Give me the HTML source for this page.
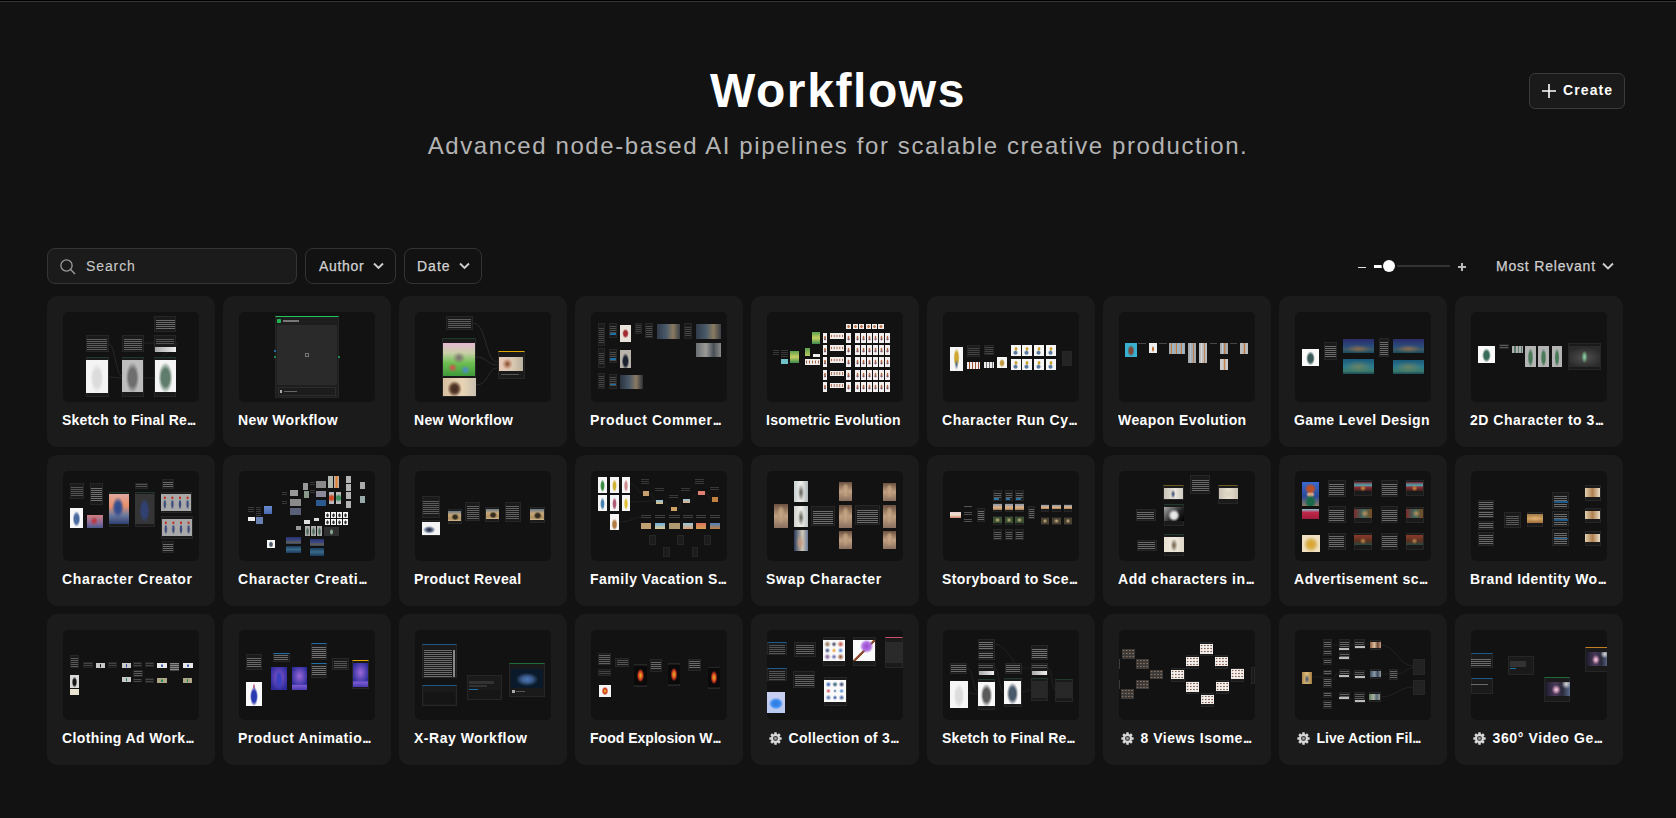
<!DOCTYPE html>
<html><head><meta charset="utf-8"><style>
*{box-sizing:border-box}
html,body{margin:0;padding:0}
body{width:1676px;height:818px;overflow:hidden;background:#121212;position:relative;font-family:"Liberation Sans",sans-serif;color:#fff}
.topline{position:absolute;left:0;top:0;width:1676px;height:1px;background:#000}
.topline2{position:absolute;left:0;top:1px;width:1676px;height:1px;background:#343434}
.h1{position:absolute;left:2px;width:1672px;top:63px;text-align:center;font-weight:700;font-size:48px;line-height:56px;letter-spacing:1.6px;color:#fff}
.sub{position:absolute;left:2px;width:1672px;top:131px;text-align:center;font-size:24px;line-height:30px;letter-spacing:1.6px;color:#b4b4b4}
.create{position:absolute;left:1529px;top:73px;width:96px;height:36px;border:1px solid #3a3a3a;border-radius:6px;background:#1a1a1a}
.create svg{position:absolute;left:11px;top:9px}
.create span{position:absolute;left:33px;top:8px;font-size:14px;font-weight:700;line-height:16px;letter-spacing:1.1px;color:#fff}
.search{position:absolute;left:47px;top:248px;width:250px;height:36px;border:1px solid #353535;border-radius:8px;background:#1b1b1b}
.search svg{position:absolute;left:11px;top:9px}
.search span{position:absolute;left:38px;top:9px;font-size:14px;line-height:16px;letter-spacing:.9px;color:#c8c8c8;-webkit-text-stroke:.1px #c8c8c8}
.dd{position:absolute;top:248px;height:36px;border:1px solid #333;border-radius:8px}
.dd span{position:absolute;left:13px;top:9px;font-size:14px;line-height:16px;letter-spacing:.7px;color:#d2d2d2;-webkit-text-stroke:.25px #d2d2d2}
.dd svg{position:absolute;top:13px}
.card{position:absolute;width:168px;height:151px;background:#1b1b1b;border-radius:10px}
.thumb{position:absolute;left:16px;top:16px;width:136px;height:90px;background:#121212;border-radius:5px;overflow:hidden}
.thumb div{position:absolute}
.ttl{position:absolute;left:15px;top:116px;width:140px;white-space:nowrap;overflow:hidden;font-size:14px;font-weight:700;line-height:16px;letter-spacing:.35px;color:#fff}
.ttl.ar{letter-spacing:0}
.el{letter-spacing:-1.3px}
.gear{display:inline-block;vertical-align:-1.5px;margin-left:3px;margin-right:6.5px}
</style></head><body>
<div class="topline"></div><div class="topline2"></div>
<div class="h1">Workflows</div>
<div class="sub">Advanced node-based AI pipelines for scalable creative production.</div>
<div class="create"><svg width="16" height="16" viewBox="0 0 16 16"><path d="M8 1v14M1 8h14" stroke="#fff" stroke-width="1.6"/></svg><span>Create</span></div>
<div class="search"><svg width="18" height="18" viewBox="0 0 18 18"><circle cx="7.5" cy="7.5" r="5.6" fill="none" stroke="#9a9a9a" stroke-width="1.3"/><path d="M11.6 11.6l4.4 4.4" stroke="#9a9a9a" stroke-width="1.4"/></svg><span>Search</span></div>
<div class="dd" style="left:305px;width:91px"><span>Author</span><svg style="left:67px" width="11" height="8" viewBox="0 0 11 8"><path d="M1 1.5l4.5 4.5 4.5-4.5" fill="none" stroke="#d0d0d0" stroke-width="1.9"/></svg></div>
<div class="dd" style="left:404px;width:78px"><span style="left:12px;letter-spacing:1px">Date</span><svg style="left:54px" width="11" height="8" viewBox="0 0 11 8"><path d="M1 1.5l4.5 4.5 4.5-4.5" fill="none" stroke="#d0d0d0" stroke-width="1.9"/></svg></div>
<div style="position:absolute;left:1358px;top:267px;width:8px;height:1px;background:#e0e0e0"></div>
<div style="position:absolute;left:1374px;top:265px;width:8px;height:2.5px;background:#fff"></div>
<div style="position:absolute;left:1397px;top:265px;width:53px;height:2px;background:#333"></div>
<div style="position:absolute;left:1383px;top:260px;width:12px;height:12px;border-radius:50%;background:#fff;box-shadow:0 0 0 1.5px #141414"></div>
<div style="position:absolute;left:1458px;top:266px;width:8px;height:2px;background:#bbb"></div>
<div style="position:absolute;left:1461px;top:263px;width:2px;height:8px;background:#bbb"></div>
<div style="position:absolute;left:1496px;top:258px;font-size:14px;line-height:16px;letter-spacing:.8px;color:#cfcfcf;-webkit-text-stroke:.25px #cfcfcf">Most Relevant</div>
<svg style="position:absolute;left:1602px;top:262px" width="12" height="8" viewBox="0 0 12 8"><path d="M1 1.5l5 5 5-5" fill="none" stroke="#cfcfcf" stroke-width="1.9"/></svg>
<div class="card" style="left:47px;top:296px"><div class="thumb"><svg style="position:absolute;left:0;top:0" width="136" height="90" viewBox="0 0 136 90"><g fill="none" stroke="#3a3a3a" stroke-width="0.5"><path d="M45.6 32C52 32 53 64 59 64"/><path d="M45 65C52 65 52 66 59 66"/><path d="M81 31C86 31 86 31 91 31"/><path d="M80.3 66C86 66 86 66 92 66"/><path d="M113 31C118 31 100 44 100 44"/></g></svg><div style="left:91.3px;top:4.4px;width:22.0px;height:15.4px;background:#1a1a1a;border:0.6px solid #262626;"></div><div style="left:93.1px;top:7.8px;width:18.5px;height:10.2px;background:repeating-linear-gradient(#cfcfcf 0 0.8px,transparent 0.8px 2.0px);opacity:.45"></div><div style="left:22.5px;top:23.3px;width:23.1px;height:16.9px;background:#1a1a1a;border:0.6px solid #262626;"></div><div style="left:24.3px;top:27.0px;width:19.4px;height:11.2px;background:repeating-linear-gradient(#b0b0b0 0 0.8px,transparent 0.8px 2.0px);opacity:.45"></div><div style="left:58.9px;top:23.3px;width:22.0px;height:16.3px;background:#1a1a1a;border:0.6px solid #262626;"></div><div style="left:60.7px;top:26.9px;width:18.5px;height:10.8px;background:repeating-linear-gradient(#bdbdbd 0 0.8px,transparent 0.8px 2.0px);opacity:.45"></div><div style="left:91.3px;top:23.3px;width:22.0px;height:16.9px;background:#1a1a1a;border:0.6px solid #262626;"></div><div style="left:93.0px;top:27.0px;width:18.0px;height:6.0px;background:repeating-linear-gradient(#999 0 0.8px,transparent 0.8px 2.0px);opacity:.45"></div><div style="left:92.0px;top:35.2px;width:20.5px;height:4.4px;background:linear-gradient(90deg,#aaa,#eee)"></div><div style="left:22.5px;top:44.5px;width:23.1px;height:40.8px;background:#1a1a1a;border:0.6px solid #262626;border-top:0.8px solid #1f3a2a;"></div><div style="left:58.9px;top:44.5px;width:22.0px;height:40.8px;background:#1a1a1a;border:0.6px solid #262626;border-top:0.8px solid #1f3a2a;"></div><div style="left:91.3px;top:44.5px;width:22.0px;height:40.8px;background:#1a1a1a;border:0.6px solid #262626;border-top:0.8px solid #1f3a2a;"></div><div style="left:22.9px;top:48.2px;width:22.0px;height:33.0px;background:radial-gradient(ellipse 30% 45% at 50% 55%,#dcdcdc 0,#dcdcdc 55%,transparent 100%),#f4f4f4"></div><div style="left:59.0px;top:48.2px;width:21.3px;height:31.8px;background:radial-gradient(ellipse 32% 48% at 50% 55%,#6e6e6e 0,#6e6e6e 55%,transparent 100%),#bdbdbd"></div><div style="left:91.9px;top:48.2px;width:21.1px;height:31.8px;background:radial-gradient(ellipse 34% 48% at 50% 55%,#5f7d6a 0,#5f7d6a 55%,transparent 100%),#f5f5f5"></div></div><div class="ttl" style="letter-spacing:0.200px">Sketch to Final Re<span class="el">...</span></div></div><div class="card" style="left:223px;top:296px"><div class="thumb"><div style="left:36.1px;top:4.2px;width:63.8px;height:81.4px;background:#1e1e1e;border:0.6px solid #262626;border-top:0.8px solid #22c55e;"></div><div style="left:38.0px;top:6.6px;width:4.4px;height:4.2px;background:#22b455;border-radius:1px"></div><div style="left:44.0px;top:7.8px;width:16.0px;height:1.8px;background:#777"></div><div style="left:38.0px;top:13.0px;width:60.0px;height:60.2px;background:#2a2a2a;border-radius:1px"></div><div style="left:66.0px;top:41.0px;width:4.0px;height:4.0px;background:transparent;border:0.7px solid #777"></div><div style="left:38.7px;top:75.4px;width:58.7px;height:8.2px;background:#1c1c1c;border:0.6px solid #2c2c2c"></div><div style="left:40.5px;top:78.0px;width:2.5px;height:3.0px;background:#aaa"></div><div style="left:45.0px;top:78.8px;width:13.0px;height:1.4px;background:#666"></div><div style="left:35.0px;top:38.0px;width:1.8px;height:2.0px;background:#2b7fc0;border-radius:50%"></div><div style="left:35.0px;top:44.0px;width:1.8px;height:2.0px;background:#22a355;border-radius:50%"></div><div style="left:99.3px;top:44.0px;width:1.7px;height:2.0px;background:#22a355;border-radius:50%"></div></div><div class="ttl" style="letter-spacing:0.381px">New Workflow</div></div><div class="card" style="left:399px;top:296px"><div class="thumb"><svg style="position:absolute;left:0;top:0" width="136" height="90" viewBox="0 0 136 90"><g fill="none" stroke="#444" stroke-width="0.5"><path d="M57.8 11C72 11 70 50 82.5 50"/><path d="M61 45C72 45 72 53 82.5 53"/><path d="M61 73C74 73 72 56 82.5 56"/></g></svg><div style="left:30.8px;top:4.2px;width:27.0px;height:14.0px;background:#1a1a1a;border:0.6px solid #262626;"></div><div style="left:33.0px;top:7.3px;width:22.7px;height:9.2px;background:repeating-linear-gradient(#aaa 0 0.8px,transparent 0.8px 2.0px);opacity:.45"></div><div style="left:27.3px;top:25.9px;width:33.7px;height:59.4px;background:#1a1a1a;border:0.6px solid #262626;border-top:0.8px solid #1f3a2a;"></div><div style="left:27.8px;top:31.1px;width:32.5px;height:33.0px;background:radial-gradient(ellipse 20% 18% at 50% 45%,#7a6a70,transparent),radial-gradient(circle at 30% 75%,#d94a4a 0,transparent 14%),radial-gradient(circle at 70% 82%,#4a8ad9 0,transparent 14%),linear-gradient(#e6b7d2 0%,#c9d0a8 30%,#6fbf52 60%,#3f9a3a 100%)"></div><div style="left:28.0px;top:66.0px;width:32.5px;height:18.2px;background:radial-gradient(ellipse 22% 45% at 35% 60%,#3c2a22 0,#5a3a2a 50%,transparent 100%),linear-gradient(90deg,#d8c0a0,#e8d4b4 60%,#c8c0b0)"></div><div style="left:82.5px;top:39.0px;width:27.0px;height:28.0px;background:#1a1a1a;border:0.6px solid #262626;border-top:0.8px solid #e0a800;"></div><div style="left:83.8px;top:45.4px;width:24.3px;height:13.6px;background:radial-gradient(ellipse 22% 40% at 35% 50%,#7a4a30 0,#c99a80 60%,transparent 100%),linear-gradient(90deg,#e8c8b8,#d8c8b0 60%,#b8b0a0)"></div><div style="left:86.0px;top:61.5px;width:18.0px;height:1.5px;background:#555"></div></div><div class="ttl" style="letter-spacing:0.319px">New Workflow</div></div><div class="card" style="left:575px;top:296px"><div class="thumb"><div style="left:6.6px;top:11.0px;width:7.7px;height:22.5px;background:#1a1a1a;border:0.6px solid #262626;"></div><div style="left:7.6px;top:15.9px;width:5.7px;height:14.9px;background:repeating-linear-gradient(#777 0 0.8px,transparent 0.8px 2.0px);opacity:.45"></div><div style="left:6.6px;top:36.3px;width:7.7px;height:19.3px;background:#1a1a1a;border:0.6px solid #262626;"></div><div style="left:7.6px;top:40.5px;width:5.7px;height:12.7px;background:repeating-linear-gradient(#777 0 0.8px,transparent 0.8px 2.0px);opacity:.45"></div><div style="left:6.6px;top:61.0px;width:7.7px;height:15.5px;background:#1a1a1a;border:0.6px solid #262626;"></div><div style="left:7.6px;top:64.4px;width:5.7px;height:10.2px;background:repeating-linear-gradient(#777 0 0.8px,transparent 0.8px 2.0px);opacity:.45"></div><div style="left:17.6px;top:11.0px;width:8.3px;height:14.9px;background:#1a1a1a;border:0.6px solid #262626;"></div><div style="left:18.6px;top:14.3px;width:6.3px;height:9.8px;background:repeating-linear-gradient(#888 0 0.8px,transparent 0.8px 2.0px);opacity:.45"></div><div style="left:18.5px;top:20.9px;width:6.5px;height:1.8px;background:#1d6fa5"></div><div style="left:17.6px;top:36.9px;width:8.3px;height:14.3px;background:#1a1a1a;border:0.6px solid #262626;"></div><div style="left:18.6px;top:40.0px;width:6.3px;height:9.4px;background:repeating-linear-gradient(#888 0 0.8px,transparent 0.8px 2.0px);opacity:.45"></div><div style="left:18.5px;top:46.2px;width:6.5px;height:1.8px;background:#1d6fa5"></div><div style="left:17.6px;top:62.0px;width:8.3px;height:14.5px;background:#1a1a1a;border:0.6px solid #262626;"></div><div style="left:18.6px;top:65.2px;width:6.3px;height:9.6px;background:repeating-linear-gradient(#888 0 0.8px,transparent 0.8px 2.0px);opacity:.45"></div><div style="left:18.5px;top:71.5px;width:6.5px;height:1.8px;background:#1d6fa5"></div><div style="left:28.8px;top:12.7px;width:11.4px;height:17.3px;background:radial-gradient(ellipse 30% 28% at 50% 50%,#a02a30 0,#a02a30 55%,transparent 100%),#e8e2d8"></div><div style="left:28.8px;top:37.7px;width:11.4px;height:17.9px;background:radial-gradient(ellipse 34% 45% at 50% 62%,#1a2230 0,#1a2230 55%,transparent 100%),#b8b4ac"></div><div style="left:28.8px;top:62.7px;width:23.5px;height:14.3px;background:linear-gradient(90deg,#2a3340,#4a5868 40%,#8a7a62 70%,#2a3038)"></div><div style="left:43.5px;top:11.0px;width:7.7px;height:11.0px;background:#1a1a1a;border:0.6px solid #262626;"></div><div style="left:44.5px;top:13.4px;width:5.7px;height:7.3px;background:repeating-linear-gradient(#777 0 0.8px,transparent 0.8px 2.0px);opacity:.45"></div><div style="left:54.0px;top:11.0px;width:7.6px;height:15.4px;background:#1a1a1a;border:0.6px solid #262626;"></div><div style="left:55.0px;top:14.4px;width:5.6px;height:10.2px;background:repeating-linear-gradient(#888 0 0.8px,transparent 0.8px 2.0px);opacity:.45"></div><div style="left:65.5px;top:12.3px;width:23.6px;height:14.7px;background:linear-gradient(90deg,#303a48,#4a5a6a 40%,#8a7a60 70%,#3a4048)"></div><div style="left:93.0px;top:11.0px;width:8.2px;height:16.0px;background:#1a1a1a;border:0.6px solid #262626;"></div><div style="left:94.0px;top:14.5px;width:6.2px;height:10.6px;background:repeating-linear-gradient(#777 0 0.8px,transparent 0.8px 2.0px);opacity:.45"></div><div style="left:105.4px;top:12.3px;width:24.2px;height:14.7px;background:linear-gradient(90deg,#303a48,#4a5a6a 40%,#8a7a60 70%,#3a4048)"></div><div style="left:105.4px;top:31.1px;width:24.2px;height:14.3px;background:linear-gradient(90deg,#6a6e72,#9a9a98 40%,#4a5058 70%,#8a8a88)"></div></div><div class="ttl" style="letter-spacing:0.650px">Product Commer<span class="el">...</span></div></div><div class="card" style="left:751px;top:296px"><div class="thumb"><div style="left:55.6px;top:20.7px;width:4.9px;height:10.3px;background:radial-gradient(ellipse 24% 18% at 50% 42%,#b86a40 0,#b86a40 50%,transparent 100%),radial-gradient(ellipse 30% 16% at 50% 62%,#7a5a70 0,#7a5a70 45%,transparent 100%),#f2efee"></div><div style="left:79.0px;top:20.7px;width:5.2px;height:10.3px;background:radial-gradient(ellipse 24% 18% at 50% 42%,#b86a40 0,#b86a40 50%,transparent 100%),radial-gradient(ellipse 30% 16% at 50% 62%,#7a5a70 0,#7a5a70 45%,transparent 100%),#f2efee"></div><div style="left:88.0px;top:20.7px;width:5.0px;height:10.3px;background:radial-gradient(ellipse 24% 18% at 50% 42%,#b86a40 0,#b86a40 50%,transparent 100%),radial-gradient(ellipse 30% 16% at 50% 62%,#7a5a70 0,#7a5a70 45%,transparent 100%),#f2efee"></div><div style="left:94.3px;top:20.7px;width:4.9px;height:10.3px;background:radial-gradient(ellipse 24% 18% at 50% 42%,#b86a40 0,#b86a40 50%,transparent 100%),radial-gradient(ellipse 30% 16% at 50% 62%,#7a5a70 0,#7a5a70 45%,transparent 100%),#f2efee"></div><div style="left:100.3px;top:20.7px;width:4.7px;height:10.3px;background:radial-gradient(ellipse 24% 18% at 50% 42%,#b86a40 0,#b86a40 50%,transparent 100%),radial-gradient(ellipse 30% 16% at 50% 62%,#7a5a70 0,#7a5a70 45%,transparent 100%),#f2efee"></div><div style="left:106.2px;top:20.7px;width:4.9px;height:10.3px;background:radial-gradient(ellipse 24% 18% at 50% 42%,#b86a40 0,#b86a40 50%,transparent 100%),radial-gradient(ellipse 30% 16% at 50% 62%,#7a5a70 0,#7a5a70 45%,transparent 100%),#f2efee"></div><div style="left:112.2px;top:20.7px;width:5.0px;height:10.3px;background:radial-gradient(ellipse 24% 18% at 50% 42%,#b86a40 0,#b86a40 50%,transparent 100%),radial-gradient(ellipse 30% 16% at 50% 62%,#7a5a70 0,#7a5a70 45%,transparent 100%),#f2efee"></div><div style="left:118.0px;top:20.7px;width:5.0px;height:10.3px;background:radial-gradient(ellipse 24% 18% at 50% 42%,#b86a40 0,#b86a40 50%,transparent 100%),radial-gradient(ellipse 30% 16% at 50% 62%,#7a5a70 0,#7a5a70 45%,transparent 100%),#f2efee"></div><div style="left:62.9px;top:20.9px;width:13.8px;height:5.8px;background:radial-gradient(ellipse 0.8px 1.6px,#a86040 0 60%,transparent 100%) 0 0/2.8px 100%,#f0ecea"></div><div style="left:55.6px;top:32.8px;width:4.9px;height:10.1px;background:radial-gradient(ellipse 24% 18% at 50% 42%,#b86a40 0,#b86a40 50%,transparent 100%),radial-gradient(ellipse 30% 16% at 50% 62%,#7a5a70 0,#7a5a70 45%,transparent 100%),#f2efee"></div><div style="left:79.0px;top:32.8px;width:5.2px;height:10.1px;background:radial-gradient(ellipse 24% 18% at 50% 42%,#b86a40 0,#b86a40 50%,transparent 100%),radial-gradient(ellipse 30% 16% at 50% 62%,#7a5a70 0,#7a5a70 45%,transparent 100%),#f2efee"></div><div style="left:88.0px;top:32.8px;width:5.0px;height:10.1px;background:radial-gradient(ellipse 24% 18% at 50% 42%,#b86a40 0,#b86a40 50%,transparent 100%),radial-gradient(ellipse 30% 16% at 50% 62%,#7a5a70 0,#7a5a70 45%,transparent 100%),#f2efee"></div><div style="left:94.3px;top:32.8px;width:4.9px;height:10.1px;background:radial-gradient(ellipse 24% 18% at 50% 42%,#b86a40 0,#b86a40 50%,transparent 100%),radial-gradient(ellipse 30% 16% at 50% 62%,#7a5a70 0,#7a5a70 45%,transparent 100%),#f2efee"></div><div style="left:100.3px;top:32.8px;width:4.7px;height:10.1px;background:radial-gradient(ellipse 24% 18% at 50% 42%,#b86a40 0,#b86a40 50%,transparent 100%),radial-gradient(ellipse 30% 16% at 50% 62%,#7a5a70 0,#7a5a70 45%,transparent 100%),#f2efee"></div><div style="left:106.2px;top:32.8px;width:4.9px;height:10.1px;background:radial-gradient(ellipse 24% 18% at 50% 42%,#b86a40 0,#b86a40 50%,transparent 100%),radial-gradient(ellipse 30% 16% at 50% 62%,#7a5a70 0,#7a5a70 45%,transparent 100%),#f2efee"></div><div style="left:112.2px;top:32.8px;width:5.0px;height:10.1px;background:radial-gradient(ellipse 24% 18% at 50% 42%,#b86a40 0,#b86a40 50%,transparent 100%),radial-gradient(ellipse 30% 16% at 50% 62%,#7a5a70 0,#7a5a70 45%,transparent 100%),#f2efee"></div><div style="left:118.0px;top:32.8px;width:5.0px;height:10.1px;background:radial-gradient(ellipse 24% 18% at 50% 42%,#b86a40 0,#b86a40 50%,transparent 100%),radial-gradient(ellipse 30% 16% at 50% 62%,#7a5a70 0,#7a5a70 45%,transparent 100%),#f2efee"></div><div style="left:62.9px;top:33.0px;width:13.8px;height:5.8px;background:radial-gradient(ellipse 0.8px 1.6px,#a86040 0 60%,transparent 100%) 0 0/2.8px 100%,#f0ecea"></div><div style="left:55.6px;top:44.9px;width:4.9px;height:10.1px;background:radial-gradient(ellipse 24% 18% at 50% 42%,#b86a40 0,#b86a40 50%,transparent 100%),radial-gradient(ellipse 30% 16% at 50% 62%,#7a5a70 0,#7a5a70 45%,transparent 100%),#f2efee"></div><div style="left:79.0px;top:44.9px;width:5.2px;height:10.1px;background:radial-gradient(ellipse 24% 18% at 50% 42%,#b86a40 0,#b86a40 50%,transparent 100%),radial-gradient(ellipse 30% 16% at 50% 62%,#7a5a70 0,#7a5a70 45%,transparent 100%),#f2efee"></div><div style="left:88.0px;top:44.9px;width:5.0px;height:10.1px;background:radial-gradient(ellipse 24% 18% at 50% 42%,#b86a40 0,#b86a40 50%,transparent 100%),radial-gradient(ellipse 30% 16% at 50% 62%,#7a5a70 0,#7a5a70 45%,transparent 100%),#f2efee"></div><div style="left:94.3px;top:44.9px;width:4.9px;height:10.1px;background:radial-gradient(ellipse 24% 18% at 50% 42%,#b86a40 0,#b86a40 50%,transparent 100%),radial-gradient(ellipse 30% 16% at 50% 62%,#7a5a70 0,#7a5a70 45%,transparent 100%),#f2efee"></div><div style="left:100.3px;top:44.9px;width:4.7px;height:10.1px;background:radial-gradient(ellipse 24% 18% at 50% 42%,#b86a40 0,#b86a40 50%,transparent 100%),radial-gradient(ellipse 30% 16% at 50% 62%,#7a5a70 0,#7a5a70 45%,transparent 100%),#f2efee"></div><div style="left:106.2px;top:44.9px;width:4.9px;height:10.1px;background:radial-gradient(ellipse 24% 18% at 50% 42%,#b86a40 0,#b86a40 50%,transparent 100%),radial-gradient(ellipse 30% 16% at 50% 62%,#7a5a70 0,#7a5a70 45%,transparent 100%),#f2efee"></div><div style="left:112.2px;top:44.9px;width:5.0px;height:10.1px;background:radial-gradient(ellipse 24% 18% at 50% 42%,#b86a40 0,#b86a40 50%,transparent 100%),radial-gradient(ellipse 30% 16% at 50% 62%,#7a5a70 0,#7a5a70 45%,transparent 100%),#f2efee"></div><div style="left:118.0px;top:44.9px;width:5.0px;height:10.1px;background:radial-gradient(ellipse 24% 18% at 50% 42%,#b86a40 0,#b86a40 50%,transparent 100%),radial-gradient(ellipse 30% 16% at 50% 62%,#7a5a70 0,#7a5a70 45%,transparent 100%),#f2efee"></div><div style="left:62.9px;top:45.1px;width:13.8px;height:5.8px;background:radial-gradient(ellipse 0.8px 1.6px,#a86040 0 60%,transparent 100%) 0 0/2.8px 100%,#f0ecea"></div><div style="left:55.6px;top:58.3px;width:4.9px;height:10.1px;background:radial-gradient(ellipse 24% 18% at 50% 42%,#b86a40 0,#b86a40 50%,transparent 100%),radial-gradient(ellipse 30% 16% at 50% 62%,#7a5a70 0,#7a5a70 45%,transparent 100%),#f2efee"></div><div style="left:79.0px;top:58.3px;width:5.2px;height:10.1px;background:radial-gradient(ellipse 24% 18% at 50% 42%,#b86a40 0,#b86a40 50%,transparent 100%),radial-gradient(ellipse 30% 16% at 50% 62%,#7a5a70 0,#7a5a70 45%,transparent 100%),#f2efee"></div><div style="left:88.0px;top:58.3px;width:5.0px;height:10.1px;background:radial-gradient(ellipse 24% 18% at 50% 42%,#b86a40 0,#b86a40 50%,transparent 100%),radial-gradient(ellipse 30% 16% at 50% 62%,#7a5a70 0,#7a5a70 45%,transparent 100%),#f2efee"></div><div style="left:94.3px;top:58.3px;width:4.9px;height:10.1px;background:radial-gradient(ellipse 24% 18% at 50% 42%,#b86a40 0,#b86a40 50%,transparent 100%),radial-gradient(ellipse 30% 16% at 50% 62%,#7a5a70 0,#7a5a70 45%,transparent 100%),#f2efee"></div><div style="left:100.3px;top:58.3px;width:4.7px;height:10.1px;background:radial-gradient(ellipse 24% 18% at 50% 42%,#b86a40 0,#b86a40 50%,transparent 100%),radial-gradient(ellipse 30% 16% at 50% 62%,#7a5a70 0,#7a5a70 45%,transparent 100%),#f2efee"></div><div style="left:106.2px;top:58.3px;width:4.9px;height:10.1px;background:radial-gradient(ellipse 24% 18% at 50% 42%,#b86a40 0,#b86a40 50%,transparent 100%),radial-gradient(ellipse 30% 16% at 50% 62%,#7a5a70 0,#7a5a70 45%,transparent 100%),#f2efee"></div><div style="left:112.2px;top:58.3px;width:5.0px;height:10.1px;background:radial-gradient(ellipse 24% 18% at 50% 42%,#b86a40 0,#b86a40 50%,transparent 100%),radial-gradient(ellipse 30% 16% at 50% 62%,#7a5a70 0,#7a5a70 45%,transparent 100%),#f2efee"></div><div style="left:118.0px;top:58.3px;width:5.0px;height:10.1px;background:radial-gradient(ellipse 24% 18% at 50% 42%,#b86a40 0,#b86a40 50%,transparent 100%),radial-gradient(ellipse 30% 16% at 50% 62%,#7a5a70 0,#7a5a70 45%,transparent 100%),#f2efee"></div><div style="left:62.9px;top:58.5px;width:13.8px;height:5.8px;background:radial-gradient(ellipse 0.8px 1.6px,#a86040 0 60%,transparent 100%) 0 0/2.8px 100%,#f0ecea"></div><div style="left:55.6px;top:70.4px;width:4.9px;height:10.1px;background:radial-gradient(ellipse 24% 18% at 50% 42%,#b86a40 0,#b86a40 50%,transparent 100%),radial-gradient(ellipse 30% 16% at 50% 62%,#7a5a70 0,#7a5a70 45%,transparent 100%),#f2efee"></div><div style="left:79.0px;top:70.4px;width:5.2px;height:10.1px;background:radial-gradient(ellipse 24% 18% at 50% 42%,#b86a40 0,#b86a40 50%,transparent 100%),radial-gradient(ellipse 30% 16% at 50% 62%,#7a5a70 0,#7a5a70 45%,transparent 100%),#f2efee"></div><div style="left:88.0px;top:70.4px;width:5.0px;height:10.1px;background:radial-gradient(ellipse 24% 18% at 50% 42%,#b86a40 0,#b86a40 50%,transparent 100%),radial-gradient(ellipse 30% 16% at 50% 62%,#7a5a70 0,#7a5a70 45%,transparent 100%),#f2efee"></div><div style="left:94.3px;top:70.4px;width:4.9px;height:10.1px;background:radial-gradient(ellipse 24% 18% at 50% 42%,#b86a40 0,#b86a40 50%,transparent 100%),radial-gradient(ellipse 30% 16% at 50% 62%,#7a5a70 0,#7a5a70 45%,transparent 100%),#f2efee"></div><div style="left:100.3px;top:70.4px;width:4.7px;height:10.1px;background:radial-gradient(ellipse 24% 18% at 50% 42%,#b86a40 0,#b86a40 50%,transparent 100%),radial-gradient(ellipse 30% 16% at 50% 62%,#7a5a70 0,#7a5a70 45%,transparent 100%),#f2efee"></div><div style="left:106.2px;top:70.4px;width:4.9px;height:10.1px;background:radial-gradient(ellipse 24% 18% at 50% 42%,#b86a40 0,#b86a40 50%,transparent 100%),radial-gradient(ellipse 30% 16% at 50% 62%,#7a5a70 0,#7a5a70 45%,transparent 100%),#f2efee"></div><div style="left:112.2px;top:70.4px;width:5.0px;height:10.1px;background:radial-gradient(ellipse 24% 18% at 50% 42%,#b86a40 0,#b86a40 50%,transparent 100%),radial-gradient(ellipse 30% 16% at 50% 62%,#7a5a70 0,#7a5a70 45%,transparent 100%),#f2efee"></div><div style="left:118.0px;top:70.4px;width:5.0px;height:10.1px;background:radial-gradient(ellipse 24% 18% at 50% 42%,#b86a40 0,#b86a40 50%,transparent 100%),radial-gradient(ellipse 30% 16% at 50% 62%,#7a5a70 0,#7a5a70 45%,transparent 100%),#f2efee"></div><div style="left:62.9px;top:70.6px;width:13.8px;height:5.8px;background:radial-gradient(ellipse 0.8px 1.6px,#a86040 0 60%,transparent 100%) 0 0/2.8px 100%,#f0ecea"></div><div style="left:79.0px;top:11.6px;width:5.2px;height:5.4px;background:radial-gradient(ellipse 32% 35% at 50% 50%,#c07040 0,#c07040 55%,transparent 100%),#eee"></div><div style="left:85.8px;top:11.6px;width:5.0px;height:5.4px;background:radial-gradient(ellipse 32% 35% at 50% 50%,#c07040 0,#c07040 55%,transparent 100%),#eee"></div><div style="left:92.2px;top:11.6px;width:4.8px;height:5.4px;background:radial-gradient(ellipse 32% 35% at 50% 50%,#c07040 0,#c07040 55%,transparent 100%),#eee"></div><div style="left:98.5px;top:11.6px;width:5.1px;height:5.4px;background:radial-gradient(ellipse 32% 35% at 50% 50%,#c07040 0,#c07040 55%,transparent 100%),#eee"></div><div style="left:104.7px;top:11.6px;width:5.1px;height:5.4px;background:radial-gradient(ellipse 32% 35% at 50% 50%,#c07040 0,#c07040 55%,transparent 100%),#eee"></div><div style="left:111.3px;top:11.6px;width:5.3px;height:5.4px;background:radial-gradient(ellipse 32% 35% at 50% 50%,#c07040 0,#c07040 55%,transparent 100%),#eee"></div><div style="left:23.4px;top:38.7px;width:8.5px;height:12.5px;background:linear-gradient(#5aa050,#c8d060 50%,#3a8a50)"></div><div style="left:45.0px;top:20.4px;width:8.4px;height:12.1px;background:linear-gradient(#5aa050,#c8d060 50%,#3a8a50)"></div><div style="left:38.0px;top:35.8px;width:4.9px;height:8.2px;background:linear-gradient(#5aa050,#b8c860)"></div><div style="left:13.8px;top:46.8px;width:6.9px;height:4.9px;background:#70c0c8"></div><div style="left:38.0px;top:47.0px;width:15.0px;height:6.0px;background:radial-gradient(ellipse 0.9px 1.8px,#a86040 0 60%,transparent 100%) 0 0/3px 100%,#f0ecea"></div><div style="left:46.0px;top:41.8px;width:7.0px;height:3.1px;background:#eee"></div><div style="left:6.0px;top:38.0px;width:6.0px;height:6.0px;background:repeating-linear-gradient(#666 0 0.8px,transparent 0.8px 2.0px);opacity:.45"></div><div style="left:13.5px;top:38.0px;width:7.0px;height:7.0px;background:repeating-linear-gradient(#666 0 0.8px,transparent 0.8px 2.0px);opacity:.45"></div></div><div class="ttl" style="letter-spacing:0.260px">Isometric Evolution</div></div><div class="card" style="left:927px;top:296px"><div class="thumb"><div style="left:6.8px;top:35.0px;width:13.0px;height:23.6px;background:radial-gradient(ellipse 24% 40% at 50% 45%,#d0a830 0,#d0a830 55%,transparent 100%),#f6f6f6"></div><div style="left:10.5px;top:47.0px;width:5.5px;height:11.0px;background:radial-gradient(ellipse 40% 50% at 50% 50%,#4a6a9a,transparent)"></div><div style="left:24.0px;top:33.0px;width:13.2px;height:12.0px;background:#1a1a1a;border:0.6px solid #262626;"></div><div style="left:25.1px;top:35.6px;width:11.1px;height:7.9px;background:repeating-linear-gradient(#777 0 0.8px,transparent 0.8px 2.0px);opacity:.45"></div><div style="left:24.0px;top:49.7px;width:13.2px;height:7.7px;background:repeating-linear-gradient(90deg,#eee 0 2px,#a05030 2px 3px)"></div><div style="left:41.0px;top:33.0px;width:10.2px;height:10.0px;background:#1a1a1a;border:0.6px solid #262626;"></div><div style="left:42.0px;top:35.2px;width:8.2px;height:6.6px;background:repeating-linear-gradient(#777 0 0.8px,transparent 0.8px 2.0px);opacity:.45"></div><div style="left:41.0px;top:49.5px;width:10.2px;height:6.6px;background:repeating-linear-gradient(90deg,#eee 0 2px,#777 2px 3px)"></div><div style="left:54.1px;top:44.6px;width:9.9px;height:11.3px;background:radial-gradient(ellipse 28% 38% at 50% 55%,#c09a40 0,#c09a40 55%,transparent 100%),#f6f6f6"></div><div style="left:68.0px;top:32.8px;width:9.9px;height:11.2px;background:radial-gradient(ellipse 18% 22% at 50% 35%,#c8a030 0,#c8a030 50%,transparent 100%),radial-gradient(ellipse 26% 24% at 45% 70%,#5a7aa0 0,#5a7aa0 50%,transparent 100%),#f6f6f6"></div><div style="left:68.0px;top:46.8px;width:9.9px;height:11.5px;background:radial-gradient(ellipse 18% 22% at 50% 35%,#c8a030 0,#c8a030 50%,transparent 100%),radial-gradient(ellipse 26% 24% at 45% 70%,#5a7aa0 0,#5a7aa0 50%,transparent 100%),#f6f6f6"></div><div style="left:79.4px;top:32.8px;width:9.7px;height:11.2px;background:radial-gradient(ellipse 18% 22% at 50% 35%,#c8a030 0,#c8a030 50%,transparent 100%),radial-gradient(ellipse 26% 24% at 45% 70%,#5a7aa0 0,#5a7aa0 50%,transparent 100%),#f6f6f6"></div><div style="left:79.4px;top:46.8px;width:9.7px;height:11.5px;background:radial-gradient(ellipse 18% 22% at 50% 35%,#c8a030 0,#c8a030 50%,transparent 100%),radial-gradient(ellipse 26% 24% at 45% 70%,#5a7aa0 0,#5a7aa0 50%,transparent 100%),#f6f6f6"></div><div style="left:91.1px;top:32.8px;width:9.9px;height:11.2px;background:radial-gradient(ellipse 18% 22% at 50% 35%,#c8a030 0,#c8a030 50%,transparent 100%),radial-gradient(ellipse 26% 24% at 45% 70%,#5a7aa0 0,#5a7aa0 50%,transparent 100%),#f6f6f6"></div><div style="left:91.1px;top:46.8px;width:9.9px;height:11.5px;background:radial-gradient(ellipse 18% 22% at 50% 35%,#c8a030 0,#c8a030 50%,transparent 100%),radial-gradient(ellipse 26% 24% at 45% 70%,#5a7aa0 0,#5a7aa0 50%,transparent 100%),#f6f6f6"></div><div style="left:102.9px;top:32.8px;width:9.9px;height:11.2px;background:radial-gradient(ellipse 18% 22% at 50% 35%,#c8a030 0,#c8a030 50%,transparent 100%),radial-gradient(ellipse 26% 24% at 45% 70%,#5a7aa0 0,#5a7aa0 50%,transparent 100%),#f6f6f6"></div><div style="left:102.9px;top:46.8px;width:9.9px;height:11.5px;background:radial-gradient(ellipse 18% 22% at 50% 35%,#c8a030 0,#c8a030 50%,transparent 100%),radial-gradient(ellipse 26% 24% at 45% 70%,#5a7aa0 0,#5a7aa0 50%,transparent 100%),#f6f6f6"></div><div style="left:119.4px;top:38.5px;width:9.9px;height:15.4px;background:#242424;border:0.6px solid #262626;"></div></div><div class="ttl" style="letter-spacing:0.517px">Character Run Cy<span class="el">...</span></div></div><div class="card" style="left:1103px;top:296px"><div class="thumb"><div style="left:6.4px;top:30.8px;width:11.5px;height:13.8px;background:radial-gradient(ellipse 30% 40% at 50% 55%,#7a4a3a 0,#7a4a3a 55%,transparent 100%),#3ab0d0"></div><div style="left:30.0px;top:30.8px;width:8.3px;height:10.1px;background:radial-gradient(ellipse 12% 35% at 50% 60%,#c07030 0,#c07030 55%,transparent 100%),#eeeeee"></div><div style="left:50.0px;top:30.8px;width:16.0px;height:11.2px;background:repeating-linear-gradient(90deg,#aaa 0 2.5px,#c07a40 2.5px 3.5px,#9ab4c8 3.5px 5px)"></div><div style="left:68.8px;top:30.8px;width:8.0px;height:20.4px;background:linear-gradient(90deg,#a8a8a8 20%,#b0c8d8 30%,#a8a8a8 40%,#a8a8a8 60%,#c07030 65%,#a8a8a8 75%)"></div><div style="left:79.8px;top:30.8px;width:8.2px;height:20.4px;background:linear-gradient(90deg,#bbb 20%,#ddd 30%,#bbb 40%,#bbb 60%,#c07030 66%,#bbb 76%)"></div><div style="left:101.0px;top:30.8px;width:8.1px;height:11.2px;background:linear-gradient(90deg,#aaa 20%,#b8d0e0 32%,#aaa 44%,#c07030 60%,#aaa 72%)"></div><div style="left:101.0px;top:46.8px;width:8.1px;height:11.3px;background:linear-gradient(90deg,#ccc 40%,#c07030 60%,#ccc 72%)"></div><div style="left:121.0px;top:30.8px;width:8.3px;height:11.2px;background:linear-gradient(90deg,#bbb 40%,#c07030 58%,#bbb 70%)"></div><div style="left:19.0px;top:31.0px;width:8.0px;height:2.0px;background:repeating-linear-gradient(#888 0 0.8px,transparent 0.8px 2.0px);opacity:.45"></div><div style="left:40.0px;top:31.0px;width:8.0px;height:2.0px;background:repeating-linear-gradient(#888 0 0.8px,transparent 0.8px 2.0px);opacity:.45"></div><div style="left:91.0px;top:31.0px;width:7.0px;height:2.0px;background:repeating-linear-gradient(#888 0 0.8px,transparent 0.8px 2.0px);opacity:.45"></div><div style="left:111.0px;top:31.0px;width:7.0px;height:2.0px;background:repeating-linear-gradient(#888 0 0.8px,transparent 0.8px 2.0px);opacity:.45"></div></div><div class="ttl" style="letter-spacing:0.421px">Weapon Evolution</div></div><div class="card" style="left:1279px;top:296px"><div class="thumb"><div style="left:6.8px;top:36.9px;width:16.9px;height:17.2px;background:radial-gradient(ellipse 26% 42% at 50% 55%,#3a5a5a 0,#3a5a5a 55%,transparent 100%),#fafafa"></div><div style="left:28.6px;top:29.5px;width:13.2px;height:18.9px;background:#1a1a1a;border:0.6px solid #262626;"></div><div style="left:29.7px;top:33.7px;width:11.1px;height:12.5px;background:repeating-linear-gradient(#cfcfcf 0 0.8px,transparent 0.8px 2.0px);opacity:.45"></div><div style="left:47.9px;top:27.0px;width:31.1px;height:13.9px;background:radial-gradient(ellipse 40% 30% at 50% 70%,rgba(190,120,60,.6),transparent),linear-gradient(#2a2a6a,#2a4a7a 50%,#3a5a6a 75%,#1a4a5a)"></div><div style="left:47.9px;top:47.3px;width:31.1px;height:14.5px;background:radial-gradient(ellipse 45% 40% at 50% 50%,rgba(170,140,60,.5),transparent),linear-gradient(#1a5a7a,#2a7a90 50%,#3a7a6a 80%,#1a4a5a)"></div><div style="left:83.6px;top:25.5px;width:10.8px;height:19.6px;background:#1a1a1a;border:0.6px solid #262626;"></div><div style="left:84.6px;top:29.8px;width:8.8px;height:12.9px;background:repeating-linear-gradient(#cfcfcf 0 0.8px,transparent 0.8px 2.0px);opacity:.45"></div><div style="left:97.9px;top:27.0px;width:31.4px;height:13.9px;background:radial-gradient(ellipse 40% 30% at 50% 70%,rgba(190,120,60,.6),transparent),linear-gradient(#2a2a6a,#2a4a7a 50%,#3a5a6a 75%,#1a4a5a)"></div><div style="left:97.9px;top:47.8px;width:31.4px;height:14.0px;background:radial-gradient(ellipse 45% 40% at 50% 50%,rgba(170,140,60,.5),transparent),linear-gradient(#1a5a7a,#2a7a90 50%,#3a7a6a 80%,#1a4a5a)"></div></div><div class="ttl" style="letter-spacing:0.394px">Game Level Design</div></div><div class="card" style="left:1455px;top:296px"><div class="thumb"><div style="left:6.8px;top:33.6px;width:17.4px;height:17.6px;background:radial-gradient(ellipse 26% 42% at 50% 55%,#3a6a5a 0,#3a6a5a 55%,transparent 100%),#fafafa"></div><div style="left:27.5px;top:31.9px;width:10.5px;height:5.6px;background:#1a1a1a;border:0.6px solid #262626;"></div><div style="left:28.5px;top:33.1px;width:8.5px;height:3.7px;background:repeating-linear-gradient(#aaa 0 0.8px,transparent 0.8px 2.0px);opacity:.45"></div><div style="left:41.0px;top:33.6px;width:10.7px;height:7.3px;background:repeating-linear-gradient(90deg,#b0b0b0 0 2px,#5a7a6a 2px 3.5px)"></div><div style="left:53.9px;top:33.6px;width:11.2px;height:21.4px;background:radial-gradient(ellipse 26% 45% at 50% 55%,#4a7a5a 0,#4a7a5a 55%,transparent 100%),#b4b4b4"></div><div style="left:67.4px;top:33.6px;width:10.7px;height:21.4px;background:radial-gradient(ellipse 26% 45% at 50% 55%,#4a7a5a 0,#4a7a5a 55%,transparent 100%),#b4b4b4"></div><div style="left:80.9px;top:33.6px;width:10.4px;height:21.4px;background:radial-gradient(ellipse 26% 45% at 50% 55%,#4a7a5a 0,#4a7a5a 55%,transparent 100%),#b4b4b4"></div><div style="left:97.4px;top:31.4px;width:32.2px;height:26.4px;background:#1a1a1a;border:0.6px solid #262626;"></div><div style="left:97.8px;top:33.6px;width:31.4px;height:21.4px;background:radial-gradient(ellipse 10% 30% at 50% 52%,#9ad0a8 0,#6a9a78 50%,transparent 100%),radial-gradient(ellipse 60% 50% at 50% 55%,#505050,#2a2a2a)"></div></div><div class="ttl" style="letter-spacing:0.529px">2D Character to 3<span class="el">...</span></div></div><div class="card" style="left:47px;top:455px"><div class="thumb"><div style="left:7.2px;top:12.1px;width:13.5px;height:15.9px;background:#1a1a1a;border:0.6px solid #262626;"></div><div style="left:8.3px;top:15.6px;width:11.3px;height:10.5px;background:repeating-linear-gradient(#999 0 0.8px,transparent 0.8px 2.0px);opacity:.45"></div><div style="left:27.0px;top:12.1px;width:13.2px;height:22.0px;background:#1a1a1a;border:0.6px solid #262626;"></div><div style="left:28.1px;top:16.9px;width:11.1px;height:14.5px;background:repeating-linear-gradient(#ddd 0 0.8px,transparent 0.8px 2.0px);opacity:.45"></div><div style="left:7.2px;top:37.2px;width:12.8px;height:19.5px;background:radial-gradient(ellipse 30% 40% at 50% 55%,#4a6aa0 0,#4a6aa0 55%,transparent 100%),#f8f8f8"></div><div style="left:24.0px;top:44.0px;width:16.2px;height:12.7px;background:radial-gradient(ellipse 25% 35% at 45% 45%,#c02a2a,transparent),linear-gradient(#d08080,#8a6a9a 60%,#4a5a8a)"></div><div style="left:45.8px;top:20.5px;width:20.5px;height:35.5px;background:#1a1a1a;border:0.6px solid #262626;border-top:0.8px solid #1f3a2a;"></div><div style="left:46.2px;top:23.1px;width:19.8px;height:30.3px;background:radial-gradient(ellipse 30% 35% at 45% 45%,#304a8a 0,#3a5090 50%,transparent 100%),linear-gradient(#e0a8a0,#e8906a 40%,#6a7aa0 70%,#304070)"></div><div style="left:72.0px;top:12.1px;width:13.3px;height:6.1px;background:#1a1a1a;border:0.6px solid #262626;"></div><div style="left:73.1px;top:13.4px;width:11.2px;height:4.0px;background:repeating-linear-gradient(#999 0 0.8px,transparent 0.8px 2.0px);opacity:.45"></div><div style="left:71.6px;top:20.5px;width:20.1px;height:35.5px;background:#1a1a1a;border:0.6px solid #262626;border-top:0.8px solid #1f3a2a;"></div><div style="left:72.0px;top:23.1px;width:19.3px;height:29.7px;background:radial-gradient(ellipse 28% 42% at 50% 55%,#304070 0,#304070 55%,transparent 100%),#353535"></div><div style="left:98.5px;top:8.3px;width:12.8px;height:9.9px;background:#1a1a1a;border:0.6px solid #262626;"></div><div style="left:99.5px;top:10.5px;width:10.8px;height:6.5px;background:repeating-linear-gradient(#ccc 0 0.8px,transparent 0.8px 2.0px);opacity:.45"></div><div style="left:98.0px;top:20.5px;width:31.0px;height:21.5px;background:#1a1a1a;border:0.6px solid #262626;"></div><div style="left:98.2px;top:22.9px;width:30.3px;height:16.9px;background:radial-gradient(ellipse 1.4px 1.6px at 50% 22%,#c03020 0 60%,transparent 100%) 0 0/7.6px 100%,radial-gradient(ellipse 1.6px 5px at 50% 60%,#3a4a7a 0 60%,transparent 100%) 0 0/7.6px 100%,#a8a8a8"></div><div style="left:98.0px;top:45.0px;width:31.5px;height:23.0px;background:#1a1a1a;border:0.6px solid #262626;"></div><div style="left:98.8px;top:47.6px;width:30.2px;height:17.3px;background:radial-gradient(ellipse 1.4px 1.6px at 50% 22%,#c03020 0 60%,transparent 100%) 0 0/7.6px 100%,radial-gradient(ellipse 1.6px 5px at 50% 60%,#3a4a7a 0 60%,transparent 100%) 0 0/7.6px 100%,#a8a8a8"></div><div style="left:98.5px;top:70.4px;width:12.8px;height:11.6px;background:#1a1a1a;border:0.6px solid #262626;"></div><div style="left:99.5px;top:73.0px;width:10.8px;height:7.7px;background:repeating-linear-gradient(#ccc 0 0.8px,transparent 0.8px 2.0px);opacity:.45"></div></div><div class="ttl" style="letter-spacing:0.683px">Character Creator</div></div><div class="card" style="left:223px;top:455px"><div class="thumb"><div style="left:25.0px;top:35.0px;width:8.0px;height:8.0px;background:linear-gradient(#6a8ad0,#4a6ab0)"></div><div style="left:9.4px;top:46.0px;width:6.6px;height:4.0px;background:#eee"></div><div style="left:17.0px;top:46.0px;width:7.0px;height:6.6px;background:#6a80b0"></div><div style="left:28.0px;top:68.8px;width:8.0px;height:8.2px;background:radial-gradient(ellipse 30% 40% at 50% 55%,#4a5a6a 0,#4a5a6a 55%,transparent 100%),#f6f6f6"></div><div style="left:9.0px;top:36.0px;width:6.0px;height:6.0px;background:repeating-linear-gradient(#666 0 0.8px,transparent 0.8px 2.0px);opacity:.45"></div><div style="left:17.0px;top:36.0px;width:5.0px;height:9.0px;background:repeating-linear-gradient(#666 0 0.8px,transparent 0.8px 2.0px);opacity:.45"></div><div style="left:50.8px;top:19.0px;width:8.4px;height:6.0px;background:#999"></div><div style="left:50.8px;top:28.0px;width:11.4px;height:7.0px;background:#8a8a8a"></div><div style="left:50.8px;top:37.4px;width:11.4px;height:6.6px;background:#5a6078"></div><div style="left:64.4px;top:12.0px;width:4.9px;height:6.5px;background:#999"></div><div style="left:65.0px;top:19.8px;width:4.8px;height:7.2px;background:#8a9a8a"></div><div style="left:77.0px;top:10.0px;width:9.9px;height:6.7px;background:#8a8a8a"></div><div style="left:77.0px;top:19.8px;width:9.9px;height:6.1px;background:#8a8a9a"></div><div style="left:77.0px;top:28.8px;width:9.9px;height:6.6px;background:#2a5a90"></div><div style="left:89.0px;top:5.0px;width:4.7px;height:12.0px;background:#b0b8b0"></div><div style="left:95.2px;top:5.0px;width:4.7px;height:12.0px;background:linear-gradient(90deg,#bbb,#e08030,#bbb)"></div><div style="left:90.2px;top:21.0px;width:4.6px;height:12.0px;background:radial-gradient(circle,#d04a2a 30%,#bbb 60%)"></div><div style="left:97.0px;top:21.0px;width:5.0px;height:12.0px;background:radial-gradient(circle,#3a8a5a 30%,#bbb 60%)"></div><div style="left:107.0px;top:5.0px;width:5.0px;height:6.9px;background:#b4b4b4"></div><div style="left:107.0px;top:13.2px;width:5.0px;height:6.8px;background:#b4b4b4"></div><div style="left:107.0px;top:21.1px;width:5.0px;height:6.9px;background:#b4b4b4"></div><div style="left:107.0px;top:30.3px;width:5.0px;height:6.9px;background:#b4b4b4"></div><div style="left:121.0px;top:10.8px;width:5.0px;height:6.8px;background:#aaa"></div><div style="left:121.2px;top:25.0px;width:5.1px;height:7.0px;background:#9aa"></div><div style="left:86.0px;top:41.0px;width:5.0px;height:5.8px;background:radial-gradient(ellipse 30% 40% at 50% 55%,#333 0,#333 55%,transparent 100%),#f4f4f4"></div><div style="left:86.0px;top:48.2px;width:5.0px;height:5.8px;background:radial-gradient(ellipse 30% 40% at 50% 55%,#333 0,#333 55%,transparent 100%),#f4f4f4"></div><div style="left:92.0px;top:41.0px;width:5.0px;height:5.8px;background:radial-gradient(ellipse 30% 40% at 50% 55%,#333 0,#333 55%,transparent 100%),#f4f4f4"></div><div style="left:92.0px;top:48.2px;width:5.0px;height:5.8px;background:radial-gradient(ellipse 30% 40% at 50% 55%,#333 0,#333 55%,transparent 100%),#f4f4f4"></div><div style="left:98.0px;top:41.0px;width:5.0px;height:5.8px;background:radial-gradient(ellipse 30% 40% at 50% 55%,#333 0,#333 55%,transparent 100%),#f4f4f4"></div><div style="left:98.0px;top:48.2px;width:5.0px;height:5.8px;background:radial-gradient(ellipse 30% 40% at 50% 55%,#333 0,#333 55%,transparent 100%),#f4f4f4"></div><div style="left:104.0px;top:41.0px;width:5.0px;height:5.8px;background:radial-gradient(ellipse 30% 40% at 50% 55%,#333 0,#333 55%,transparent 100%),#f4f4f4"></div><div style="left:104.0px;top:48.2px;width:5.0px;height:5.8px;background:radial-gradient(ellipse 30% 40% at 50% 55%,#333 0,#333 55%,transparent 100%),#f4f4f4"></div><div style="left:64.7px;top:49.0px;width:6.3px;height:3.8px;background:#ddd"></div><div style="left:74.8px;top:46.8px;width:5.0px;height:3.2px;background:#ddd"></div><div style="left:57.0px;top:55.0px;width:4.8px;height:4.2px;background:#999"></div><div style="left:65.8px;top:54.8px;width:4.8px;height:10.2px;background:radial-gradient(ellipse 30% 45% at 50% 55%,#4a6a5a 0,#4a6a5a 55%,transparent 100%),#aaa"></div><div style="left:71.7px;top:54.8px;width:5.1px;height:10.2px;background:radial-gradient(ellipse 30% 45% at 50% 55%,#4a6a5a 0,#4a6a5a 55%,transparent 100%),#aaa"></div><div style="left:77.9px;top:54.8px;width:4.8px;height:10.2px;background:radial-gradient(ellipse 30% 45% at 50% 55%,#4a6a5a 0,#4a6a5a 55%,transparent 100%),#aaa"></div><div style="left:85.0px;top:55.6px;width:14.6px;height:9.9px;background:radial-gradient(ellipse 12% 35% at 50% 55%,#8aa890 0,#8aa890 55%,transparent 100%),#303030"></div><div style="left:47.0px;top:65.8px;width:14.6px;height:7.0px;background:linear-gradient(#2a3070,#3a4a80 50%,#6a5a50 75%,#2a4a6a)"></div><div style="left:47.0px;top:75.4px;width:14.6px;height:6.9px;background:linear-gradient(#1a3a5a,#3a6a8a 50%,#1a3a5a)"></div><div style="left:70.6px;top:67.7px;width:14.7px;height:7.1px;background:linear-gradient(#2a3070,#3a4a80 50%,#6a5a50 75%,#2a4a6a)"></div><div style="left:70.6px;top:77.0px;width:14.7px;height:7.7px;background:linear-gradient(#1a3a5a,#3a6a8a 50%,#1a3a5a)"></div><div style="left:43.0px;top:21.0px;width:5.0px;height:3.0px;background:repeating-linear-gradient(#666 0 0.8px,transparent 0.8px 2.0px);opacity:.45"></div><div style="left:43.0px;top:30.0px;width:5.0px;height:3.0px;background:repeating-linear-gradient(#666 0 0.8px,transparent 0.8px 2.0px);opacity:.45"></div><div style="left:71.0px;top:11.0px;width:5.0px;height:3.0px;background:repeating-linear-gradient(#666 0 0.8px,transparent 0.8px 2.0px);opacity:.45"></div><div style="left:71.0px;top:19.0px;width:5.0px;height:3.0px;background:repeating-linear-gradient(#666 0 0.8px,transparent 0.8px 2.0px);opacity:.45"></div></div><div class="ttl" style="letter-spacing:0.717px">Character Creati<span class="el">...</span></div></div><div class="card" style="left:399px;top:455px"><div class="thumb"><div style="left:6.8px;top:25.0px;width:18.7px;height:21.8px;background:#1a1a1a;border:0.6px solid #262626;"></div><div style="left:8.3px;top:29.8px;width:15.7px;height:14.4px;background:repeating-linear-gradient(#aaa 0 0.8px,transparent 0.8px 2.0px);opacity:.45"></div><div style="left:6.8px;top:48.5px;width:18.7px;height:16.1px;background:#1a1a1a;border:0.6px solid #262626;"></div><div style="left:6.8px;top:51.2px;width:18.2px;height:12.8px;background:radial-gradient(ellipse 35% 30% at 40% 60%,#1a1a2a 0,#5a6a8a 50%,transparent 100%),#f4f4f4"></div><div style="left:32.5px;top:37.5px;width:14.0px;height:15.5px;background:#1a1a1a;border:0.6px solid #262626;"></div><div style="left:32.8px;top:39.8px;width:13.4px;height:10.2px;background:radial-gradient(ellipse 30% 35% at 55% 60%,#2a2420 0,#3a3020 50%,transparent 100%),linear-gradient(#6a7a8a,#c8a878 40%,#b09060 80%,#d0b890)"></div><div style="left:50.4px;top:30.6px;width:14.6px;height:19.4px;background:#1a1a1a;border:0.6px solid #262626;"></div><div style="left:51.6px;top:34.9px;width:12.3px;height:12.8px;background:repeating-linear-gradient(#bbb 0 0.8px,transparent 0.8px 2.0px);opacity:.45"></div><div style="left:70.3px;top:35.5px;width:14.2px;height:15.5px;background:#1a1a1a;border:0.6px solid #262626;"></div><div style="left:70.6px;top:37.6px;width:13.6px;height:10.3px;background:radial-gradient(ellipse 30% 35% at 55% 60%,#2a2420 0,#3a3020 50%,transparent 100%),linear-gradient(#6a7a8a,#c8a878 40%,#b09060 80%,#d0b890)"></div><div style="left:89.7px;top:30.6px;width:15.9px;height:20.0px;background:#1a1a1a;border:0.6px solid #262626;"></div><div style="left:91.0px;top:35.0px;width:13.4px;height:13.2px;background:repeating-linear-gradient(#bbb 0 0.8px,transparent 0.8px 2.0px);opacity:.45"></div><div style="left:115.0px;top:35.5px;width:14.6px;height:16.5px;background:#1a1a1a;border:0.6px solid #262626;"></div><div style="left:115.3px;top:38.0px;width:14.0px;height:11.0px;background:radial-gradient(ellipse 30% 35% at 55% 60%,#2a2420 0,#3a3020 50%,transparent 100%),linear-gradient(#6a7a8a,#c8a878 40%,#b09060 80%,#d0b890)"></div></div><div class="ttl" style="letter-spacing:0.403px">Product Reveal</div></div><div class="card" style="left:575px;top:455px"><div class="thumb"><svg style="position:absolute;left:0;top:0" width="136" height="90" viewBox="0 0 136 90"><g fill="none" stroke="#2e2e2e" stroke-width="0.5"><path d="M39.4 13C46 13 46 22 51.5 22"/><path d="M39.4 31C50 31 55 30 65 30"/><path d="M27.7 51C40 51 44 46 50 46"/><path d="M58.3 22C62 22 62 30 65 30"/><path d="M72 30C75 30 76 38 79.8 38"/><path d="M86.4 38C90 38 88 30 91.9 30"/><path d="M99 30C103 30 104 22 107 22"/><path d="M113.9 22C118 22 118 29 120.5 29"/></g></svg><div style="left:6.8px;top:5.5px;width:9.2px;height:16.0px;background:radial-gradient(ellipse 26% 40% at 50% 55%,#3a8a40 0,#3a8a40 55%,transparent 100%),#f6f6f6"></div><div style="left:19.0px;top:5.5px;width:8.7px;height:16.0px;background:radial-gradient(ellipse 26% 40% at 50% 55%,#d0b030 0,#d0b030 55%,transparent 100%),#f6f6f6"></div><div style="left:30.8px;top:5.5px;width:8.6px;height:16.0px;background:radial-gradient(ellipse 26% 40% at 50% 55%,#d08a8a 0,#d08a8a 55%,transparent 100%),#f6f6f6"></div><div style="left:6.8px;top:24.0px;width:9.2px;height:15.8px;background:radial-gradient(ellipse 26% 40% at 50% 55%,#4a80b0 0,#4a80b0 55%,transparent 100%),#f6f6f6"></div><div style="left:19.0px;top:24.0px;width:8.7px;height:15.8px;background:radial-gradient(ellipse 26% 40% at 50% 55%,#b05a7a 0,#b05a7a 55%,transparent 100%),#f6f6f6"></div><div style="left:30.8px;top:24.0px;width:8.6px;height:15.8px;background:radial-gradient(ellipse 26% 40% at 50% 55%,#e0c030 0,#e0c030 55%,transparent 100%),#f6f6f6"></div><div style="left:18.5px;top:43.0px;width:9.0px;height:15.9px;background:radial-gradient(ellipse 34% 36% at 50% 65%,#b07a40 0,#b07a40 55%,transparent 100%),#f6f6f6"></div><div style="left:51.5px;top:20.4px;width:6.8px;height:4.4px;background:#c8a070"></div><div style="left:65.0px;top:28.8px;width:7.0px;height:4.4px;background:linear-gradient(#8ac0e0,#e0c080)"></div><div style="left:79.8px;top:35.8px;width:6.6px;height:4.4px;background:#d0a060"></div><div style="left:91.9px;top:27.5px;width:7.1px;height:4.5px;background:linear-gradient(#9ac8e0,#e0b080)"></div><div style="left:107.0px;top:19.8px;width:6.9px;height:4.4px;background:#e08070"></div><div style="left:120.5px;top:26.4px;width:6.9px;height:5.0px;background:#c08040"></div><div style="left:49.7px;top:43.5px;width:10.8px;height:4.5px;background:repeating-linear-gradient(#777 0 0.8px,transparent 0.8px 2.0px);opacity:.45"></div><div style="left:49.7px;top:51.7px;width:10.8px;height:6.6px;background:#c0a070"></div><div style="left:63.8px;top:43.5px;width:10.7px;height:4.5px;background:repeating-linear-gradient(#777 0 0.8px,transparent 0.8px 2.0px);opacity:.45"></div><div style="left:63.8px;top:51.7px;width:10.7px;height:6.6px;background:linear-gradient(#6ab0e0,#e0c890)"></div><div style="left:77.9px;top:43.5px;width:11.2px;height:4.5px;background:repeating-linear-gradient(#777 0 0.8px,transparent 0.8px 2.0px);opacity:.45"></div><div style="left:77.9px;top:51.7px;width:11.2px;height:6.6px;background:#b09a70"></div><div style="left:91.9px;top:43.5px;width:10.1px;height:4.5px;background:repeating-linear-gradient(#777 0 0.8px,transparent 0.8px 2.0px);opacity:.45"></div><div style="left:91.9px;top:51.7px;width:10.1px;height:6.6px;background:linear-gradient(#9ac8e0,#e0a070)"></div><div style="left:104.7px;top:43.5px;width:10.3px;height:4.5px;background:repeating-linear-gradient(#777 0 0.8px,transparent 0.8px 2.0px);opacity:.45"></div><div style="left:104.7px;top:51.7px;width:10.3px;height:6.6px;background:linear-gradient(#e07060,#d0a050)"></div><div style="left:118.8px;top:43.5px;width:10.5px;height:4.5px;background:repeating-linear-gradient(#777 0 0.8px,transparent 0.8px 2.0px);opacity:.45"></div><div style="left:118.8px;top:51.7px;width:10.5px;height:6.6px;background:linear-gradient(#4a80c0,#c08040)"></div><div style="left:50.0px;top:8.0px;width:8.0px;height:6.0px;background:repeating-linear-gradient(#666 0 0.8px,transparent 0.8px 2.0px);opacity:.45"></div><div style="left:64.0px;top:17.0px;width:9.0px;height:4.0px;background:repeating-linear-gradient(#666 0 0.8px,transparent 0.8px 2.0px);opacity:.45"></div><div style="left:78.0px;top:24.0px;width:9.0px;height:4.0px;background:repeating-linear-gradient(#666 0 0.8px,transparent 0.8px 2.0px);opacity:.45"></div><div style="left:90.0px;top:17.0px;width:9.0px;height:4.0px;background:repeating-linear-gradient(#666 0 0.8px,transparent 0.8px 2.0px);opacity:.45"></div><div style="left:104.0px;top:8.0px;width:9.0px;height:5.0px;background:repeating-linear-gradient(#666 0 0.8px,transparent 0.8px 2.0px);opacity:.45"></div><div style="left:119.0px;top:16.0px;width:9.0px;height:4.0px;background:repeating-linear-gradient(#666 0 0.8px,transparent 0.8px 2.0px);opacity:.45"></div><div style="left:58.3px;top:63.6px;width:6.8px;height:10.1px;background:#1c1c1c;border:0.6px solid #262626;"></div><div style="left:86.4px;top:64.4px;width:7.1px;height:9.9px;background:#1c1c1c;border:0.6px solid #262626;"></div><div style="left:112.8px;top:64.4px;width:7.3px;height:9.6px;background:#1c1c1c;border:0.6px solid #262626;"></div><div style="left:72.0px;top:75.9px;width:7.0px;height:9.9px;background:#1c1c1c;border:0.6px solid #262626;"></div><div style="left:100.7px;top:75.9px;width:6.6px;height:9.9px;background:#1c1c1c;border:0.6px solid #262626;"></div></div><div class="ttl" style="letter-spacing:0.518px">Family Vacation S<span class="el">...</span></div></div><div class="card" style="left:751px;top:455px"><div class="thumb"><div style="left:6.8px;top:32.8px;width:14.1px;height:24.4px;background:radial-gradient(ellipse 30% 40% at 50% 45%,#c8a888 0,#b89878 60%,transparent 100%),linear-gradient(#6a5040,#c0a080 50%,#8a7060)"></div><div style="left:27.0px;top:9.9px;width:14.3px;height:20.9px;background:radial-gradient(ellipse 22% 40% at 50% 55%,#5a5a50,transparent),linear-gradient(90deg,#c8d0d0,#f0f0ec 50%,#b0b8b8)"></div><div style="left:27.0px;top:35.0px;width:14.3px;height:20.6px;background:radial-gradient(ellipse 22% 40% at 50% 55%,#5a5a50,transparent),linear-gradient(90deg,#d0d0cc,#f0f0ec 50%,#c0c4c4)"></div><div style="left:27.0px;top:58.9px;width:14.3px;height:20.9px;background:radial-gradient(ellipse 30% 40% at 45% 60%,#c89a80,transparent),linear-gradient(90deg,#2a3a5a,#d0c8b8 60%,#6a7a9a)"></div><div style="left:43.5px;top:35.2px;width:24.7px;height:19.8px;background:#1a1a1a;border:0.6px solid #262626;"></div><div style="left:45.5px;top:39.6px;width:20.7px;height:13.1px;background:repeating-linear-gradient(#d0d0d0 0 0.8px,transparent 0.8px 2.0px);opacity:.45"></div><div style="left:71.5px;top:10.5px;width:13.5px;height:19.8px;background:radial-gradient(ellipse 30% 40% at 50% 45%,#c8a888 0,#b89878 60%,transparent 100%),linear-gradient(#6a5040,#c0a080 50%,#8a7060)"></div><div style="left:116.0px;top:12.0px;width:13.3px;height:18.3px;background:radial-gradient(ellipse 30% 40% at 50% 45%,#c8a888 0,#b89878 60%,transparent 100%),linear-gradient(#6a5040,#c0a080 50%,#8a7060)"></div><div style="left:71.5px;top:33.6px;width:13.5px;height:23.1px;background:radial-gradient(ellipse 30% 40% at 50% 45%,#c8a888 0,#b89878 60%,transparent 100%),linear-gradient(#6a5040,#c0a080 50%,#8a7060)"></div><div style="left:116.0px;top:33.6px;width:13.3px;height:23.1px;background:radial-gradient(ellipse 30% 40% at 50% 45%,#c8a888 0,#b89878 60%,transparent 100%),linear-gradient(#6a5040,#c0a080 50%,#8a7060)"></div><div style="left:71.5px;top:60.0px;width:13.5px;height:18.3px;background:radial-gradient(ellipse 30% 40% at 50% 45%,#c8a888 0,#b89878 60%,transparent 100%),linear-gradient(#6a5040,#c0a080 50%,#8a7060)"></div><div style="left:116.0px;top:60.0px;width:13.3px;height:18.3px;background:radial-gradient(ellipse 30% 40% at 50% 45%,#c8a888 0,#b89878 60%,transparent 100%),linear-gradient(#6a5040,#c0a080 50%,#8a7060)"></div><div style="left:87.5px;top:34.3px;width:25.3px;height:20.2px;background:#1a1a1a;border:0.6px solid #262626;"></div><div style="left:89.5px;top:38.7px;width:21.3px;height:13.3px;background:repeating-linear-gradient(#d0d0d0 0 0.8px,transparent 0.8px 2.0px);opacity:.45"></div></div><div class="ttl" style="letter-spacing:0.723px">Swap Character</div></div><div class="card" style="left:927px;top:455px"><div class="thumb"><div style="left:6.6px;top:40.7px;width:11.2px;height:6.3px;background:linear-gradient(#e8d0d8,#f0e0c8 50%,#d08070)"></div><div style="left:20.9px;top:34.7px;width:8.1px;height:2.3px;background:repeating-linear-gradient(#aaa 0 0.8px,transparent 0.8px 2.0px);opacity:.45"></div><div style="left:20.9px;top:41.0px;width:8.1px;height:3.5px;background:repeating-linear-gradient(#999 0 0.8px,transparent 0.8px 2.0px);opacity:.45"></div><div style="left:20.9px;top:48.0px;width:8.1px;height:3.0px;background:repeating-linear-gradient(#999 0 0.8px,transparent 0.8px 2.0px);opacity:.45"></div><div style="left:33.6px;top:36.9px;width:8.2px;height:13.9px;background:#1a1a1a;border:0.6px solid #262626;"></div><div style="left:34.6px;top:40.0px;width:6.2px;height:9.2px;background:repeating-linear-gradient(#ccc 0 0.8px,transparent 0.8px 2.0px);opacity:.45"></div><div style="left:50.0px;top:19.3px;width:8.9px;height:10.4px;background:#1a1a1a;border:0.6px solid #262626;"></div><div style="left:51.0px;top:21.6px;width:6.9px;height:6.9px;background:repeating-linear-gradient(#aaa 0 0.8px,transparent 0.8px 2.0px);opacity:.45"></div><div style="left:51.0px;top:27.0px;width:4.9px;height:1.5px;background:#2a70a0"></div><div style="left:50.0px;top:32.2px;width:8.9px;height:8.8px;background:#1a1a1a;border:0.6px solid #262626;"></div><div style="left:50.3px;top:33.0px;width:8.3px;height:5.5px;background:linear-gradient(#8a9ab0,#e0b080 60%,#a08060)"></div><div style="left:50.0px;top:45.3px;width:8.9px;height:8.7px;background:#1a1a1a;border:0.6px solid #262626;"></div><div style="left:50.3px;top:46.2px;width:8.3px;height:6.1px;background:radial-gradient(ellipse 30% 40% at 50% 50%,#d0b888,transparent),#3a5030"></div><div style="left:50.0px;top:58.3px;width:8.9px;height:11.0px;background:#1a1a1a;border:0.6px solid #262626;"></div><div style="left:51.0px;top:60.7px;width:6.9px;height:7.3px;background:repeating-linear-gradient(#aaa 0 0.8px,transparent 0.8px 2.0px);opacity:.45"></div><div style="left:61.6px;top:19.3px;width:8.8px;height:10.4px;background:#1a1a1a;border:0.6px solid #262626;"></div><div style="left:62.6px;top:21.6px;width:6.8px;height:6.9px;background:repeating-linear-gradient(#aaa 0 0.8px,transparent 0.8px 2.0px);opacity:.45"></div><div style="left:62.6px;top:27.0px;width:4.8px;height:1.5px;background:#2a70a0"></div><div style="left:61.6px;top:32.2px;width:8.8px;height:8.8px;background:#1a1a1a;border:0.6px solid #262626;"></div><div style="left:61.9px;top:33.0px;width:8.2px;height:5.5px;background:linear-gradient(#8a9ab0,#e0b080 60%,#a08060)"></div><div style="left:61.6px;top:45.3px;width:8.8px;height:8.7px;background:#1a1a1a;border:0.6px solid #262626;"></div><div style="left:61.9px;top:46.2px;width:8.2px;height:6.1px;background:radial-gradient(ellipse 30% 40% at 50% 50%,#d0b888,transparent),#3a5030"></div><div style="left:61.6px;top:58.3px;width:8.8px;height:11.0px;background:#1a1a1a;border:0.6px solid #262626;"></div><div style="left:62.6px;top:60.7px;width:6.8px;height:7.3px;background:repeating-linear-gradient(#aaa 0 0.8px,transparent 0.8px 2.0px);opacity:.45"></div><div style="left:72.0px;top:19.3px;width:8.9px;height:10.4px;background:#1a1a1a;border:0.6px solid #262626;"></div><div style="left:73.0px;top:21.6px;width:6.9px;height:6.9px;background:repeating-linear-gradient(#aaa 0 0.8px,transparent 0.8px 2.0px);opacity:.45"></div><div style="left:73.0px;top:27.0px;width:4.9px;height:1.5px;background:#2a70a0"></div><div style="left:72.0px;top:32.2px;width:8.9px;height:8.8px;background:#1a1a1a;border:0.6px solid #262626;"></div><div style="left:72.3px;top:33.0px;width:8.3px;height:5.5px;background:linear-gradient(#8a9ab0,#e0b080 60%,#a08060)"></div><div style="left:72.0px;top:45.3px;width:8.9px;height:8.7px;background:#1a1a1a;border:0.6px solid #262626;"></div><div style="left:72.3px;top:46.2px;width:8.3px;height:6.1px;background:radial-gradient(ellipse 30% 40% at 50% 50%,#d0b888,transparent),#3a5030"></div><div style="left:72.0px;top:58.3px;width:8.9px;height:11.0px;background:#1a1a1a;border:0.6px solid #262626;"></div><div style="left:73.0px;top:60.7px;width:6.9px;height:7.3px;background:repeating-linear-gradient(#aaa 0 0.8px,transparent 0.8px 2.0px);opacity:.45"></div><div style="left:84.5px;top:35.0px;width:7.7px;height:13.4px;background:#1a1a1a;border:0.6px solid #262626;"></div><div style="left:85.5px;top:37.9px;width:5.7px;height:8.8px;background:repeating-linear-gradient(#bbb 0 0.8px,transparent 0.8px 2.0px);opacity:.45"></div><div style="left:98.0px;top:32.5px;width:8.2px;height:8.5px;background:#1a1a1a;border:0.6px solid #262626;"></div><div style="left:98.0px;top:33.6px;width:8.2px;height:4.9px;background:linear-gradient(#8a9ab0,#e0b080 60%,#a08060)"></div><div style="left:98.0px;top:45.8px;width:8.2px;height:8.7px;background:#1a1a1a;border:0.6px solid #262626;"></div><div style="left:98.0px;top:46.8px;width:8.2px;height:5.8px;background:radial-gradient(ellipse 30% 40% at 50% 50%,#d0b888,transparent),#4a4030"></div><div style="left:109.0px;top:32.5px;width:8.5px;height:8.5px;background:#1a1a1a;border:0.6px solid #262626;"></div><div style="left:109.0px;top:33.6px;width:8.5px;height:4.9px;background:linear-gradient(#8a9ab0,#e0b080 60%,#a08060)"></div><div style="left:109.0px;top:45.8px;width:8.5px;height:8.7px;background:#1a1a1a;border:0.6px solid #262626;"></div><div style="left:109.0px;top:46.8px;width:8.5px;height:5.8px;background:radial-gradient(ellipse 30% 40% at 50% 50%,#d0b888,transparent),#4a4030"></div><div style="left:120.8px;top:32.5px;width:8.5px;height:8.5px;background:#1a1a1a;border:0.6px solid #262626;"></div><div style="left:120.8px;top:33.6px;width:8.5px;height:4.9px;background:linear-gradient(#8a9ab0,#e0b080 60%,#a08060)"></div><div style="left:120.8px;top:45.8px;width:8.5px;height:8.7px;background:#1a1a1a;border:0.6px solid #262626;"></div><div style="left:120.8px;top:46.8px;width:8.5px;height:5.8px;background:radial-gradient(ellipse 30% 40% at 50% 50%,#d0b888,transparent),#4a4030"></div></div><div class="ttl" style="letter-spacing:0.371px">Storyboard to Sce<span class="el">...</span></div></div><div class="card" style="left:1103px;top:455px"><div class="thumb"><div style="left:44.0px;top:13.5px;width:20.5px;height:15.5px;background:#1a1a1a;border:0.6px solid #262626;border-top:0.8px solid #6a5a20;"></div><div style="left:44.6px;top:16.7px;width:19.4px;height:11.3px;background:radial-gradient(ellipse 12% 40% at 48% 55%,#2a3a6a,transparent),linear-gradient(90deg,#c8c4b8,#e8e4dc 60%,#d0ccc0)"></div><div style="left:44.6px;top:32.5px;width:20.6px;height:22.0px;background:#1a1a1a;border:0.6px solid #262626;border-top:0.8px solid #1f3a2a;"></div><div style="left:45.0px;top:35.8px;width:19.7px;height:14.2px;background:radial-gradient(ellipse 30% 45% at 50% 60%,#f0f0f0 0,#ddd 50%,transparent 100%),linear-gradient(135deg,#aaa,#222 60%,#000)"></div><div style="left:44.6px;top:63.0px;width:20.6px;height:22.0px;background:#1a1a1a;border:0.6px solid #262626;border-top:0.8px solid #1f3a2a;"></div><div style="left:45.0px;top:66.0px;width:20.0px;height:14.9px;background:radial-gradient(ellipse 18% 45% at 50% 55%,#6a5a40,transparent),linear-gradient(90deg,#e8e0d0,#f0ebe0 50%,#e0d8c8)"></div><div style="left:71.3px;top:4.4px;width:20.0px;height:18.7px;background:#1a1a1a;border:0.6px solid #262626;"></div><div style="left:72.9px;top:8.5px;width:16.8px;height:12.3px;background:repeating-linear-gradient(#ccc 0 0.8px,transparent 0.8px 2.0px);opacity:.45"></div><div style="left:99.2px;top:13.5px;width:20.2px;height:19.0px;background:#1a1a1a;border:0.6px solid #262626;border-top:0.8px solid #6a5a20;"></div><div style="left:99.6px;top:16.5px;width:19.4px;height:11.5px;background:radial-gradient(ellipse 30% 40% at 50% 55%,#d8d0c0,transparent),linear-gradient(90deg,#c8c0b0,#e8e0d0 50%,#c8c0b0)"></div><div style="left:16.5px;top:38.0px;width:20.4px;height:11.5px;background:#1a1a1a;border:0.6px solid #262626;"></div><div style="left:18.1px;top:40.5px;width:17.1px;height:7.6px;background:repeating-linear-gradient(#ccc 0 0.8px,transparent 0.8px 2.0px);opacity:.45"></div><div style="left:17.6px;top:68.8px;width:20.4px;height:11.0px;background:#1a1a1a;border:0.6px solid #262626;"></div><div style="left:19.2px;top:71.2px;width:17.1px;height:7.3px;background:repeating-linear-gradient(#ccc 0 0.8px,transparent 0.8px 2.0px);opacity:.45"></div></div><div class="ttl" style="letter-spacing:0.550px">Add characters in<span class="el">...</span></div></div><div class="card" style="left:1279px;top:455px"><div class="thumb"><div style="left:6.8px;top:11.2px;width:17.6px;height:23.8px;background:radial-gradient(ellipse 34% 22% at 50% 28%,#b8502a 0,#b8502a 55%,transparent 100%),radial-gradient(ellipse 34% 30% at 50% 82%,#1a6a4a 0,#1a6a4a 55%,transparent 100%),radial-gradient(ellipse 26% 16% at 50% 52%,#d8a888 0,#d8a888 50%,transparent 100%),linear-gradient(#3a6ad0,#2a4a9a 60%,#8a7a60)"></div><div style="left:6.8px;top:38.0px;width:17.6px;height:9.9px;background:linear-gradient(#8ac0d0,#c02a4a 35%,#a01a3a)"></div><div style="left:6.8px;top:64.0px;width:18.0px;height:17.4px;background:radial-gradient(circle at 50% 55%,#e0a020 0,#d8b050 30%,transparent 60%),#f0e0c0"></div><div style="left:32.8px;top:9.4px;width:17.8px;height:17.0px;background:#1a1a1a;border:0.6px solid #262626;"></div><div style="left:34.2px;top:13.1px;width:15.0px;height:11.2px;background:repeating-linear-gradient(#d0d0d0 0 0.8px,transparent 0.8px 2.0px);opacity:.45"></div><div style="left:85.6px;top:9.4px;width:17.3px;height:17.0px;background:#1a1a1a;border:0.6px solid #262626;"></div><div style="left:87.0px;top:13.1px;width:14.5px;height:11.2px;background:repeating-linear-gradient(#d0d0d0 0 0.8px,transparent 0.8px 2.0px);opacity:.45"></div><div style="left:32.8px;top:35.4px;width:17.8px;height:16.9px;background:#1a1a1a;border:0.6px solid #262626;"></div><div style="left:34.2px;top:39.1px;width:15.0px;height:11.2px;background:repeating-linear-gradient(#d0d0d0 0 0.8px,transparent 0.8px 2.0px);opacity:.45"></div><div style="left:85.6px;top:35.4px;width:17.3px;height:16.9px;background:#1a1a1a;border:0.6px solid #262626;"></div><div style="left:87.0px;top:39.1px;width:14.5px;height:11.2px;background:repeating-linear-gradient(#d0d0d0 0 0.8px,transparent 0.8px 2.0px);opacity:.45"></div><div style="left:32.8px;top:61.6px;width:17.8px;height:17.1px;background:#1a1a1a;border:0.6px solid #262626;"></div><div style="left:34.2px;top:65.4px;width:15.0px;height:11.3px;background:repeating-linear-gradient(#d0d0d0 0 0.8px,transparent 0.8px 2.0px);opacity:.45"></div><div style="left:85.6px;top:61.6px;width:17.3px;height:17.1px;background:#1a1a1a;border:0.6px solid #262626;"></div><div style="left:87.0px;top:65.4px;width:14.5px;height:11.3px;background:repeating-linear-gradient(#d0d0d0 0 0.8px,transparent 0.8px 2.0px);opacity:.45"></div><div style="left:59.2px;top:9.0px;width:18.0px;height:16.4px;background:#1a1a1a;border:0.6px solid #262626;"></div><div style="left:59.4px;top:11.0px;width:17.6px;height:9.4px;background:radial-gradient(circle at 50% 70%,#d09040 0,transparent 30%),linear-gradient(#7a2030,#50a8b0 35%,#8a2a30 60%,#3a2020)"></div><div style="left:110.6px;top:9.0px;width:18.2px;height:16.4px;background:#1a1a1a;border:0.6px solid #262626;"></div><div style="left:110.9px;top:11.0px;width:17.6px;height:9.4px;background:radial-gradient(circle at 50% 70%,#d09040 0,transparent 30%),linear-gradient(#7a2030,#50a8b0 35%,#8a2a30 60%,#3a2020)"></div><div style="left:59.2px;top:36.0px;width:18.0px;height:16.3px;background:#1a1a1a;border:0.6px solid #262626;"></div><div style="left:59.4px;top:38.0px;width:17.6px;height:9.3px;background:radial-gradient(circle at 60% 50%,#c09060 0,transparent 35%),linear-gradient(90deg,#7a2a2a,#3a6a60 50%,#7a4a20)"></div><div style="left:110.6px;top:36.0px;width:18.2px;height:16.3px;background:#1a1a1a;border:0.6px solid #262626;"></div><div style="left:110.9px;top:38.0px;width:17.6px;height:9.3px;background:radial-gradient(circle at 60% 50%,#c09060 0,transparent 35%),linear-gradient(90deg,#7a2a2a,#3a6a60 50%,#7a4a20)"></div><div style="left:59.2px;top:61.8px;width:18.0px;height:16.9px;background:#1a1a1a;border:0.6px solid #262626;"></div><div style="left:59.4px;top:63.8px;width:17.6px;height:9.9px;background:radial-gradient(circle at 50% 60%,#c08a50 0,transparent 30%),linear-gradient(#8a3a2a,#5a3020 60%,#2a4a40)"></div><div style="left:110.6px;top:61.8px;width:18.2px;height:16.9px;background:#1a1a1a;border:0.6px solid #262626;"></div><div style="left:110.9px;top:63.8px;width:17.6px;height:9.9px;background:radial-gradient(circle at 50% 60%,#c08a50 0,transparent 30%),linear-gradient(#8a3a2a,#5a3020 60%,#2a4a40)"></div></div><div class="ttl" style="letter-spacing:0.517px">Advertisement sc<span class="el">...</span></div></div><div class="card" style="left:1455px;top:455px"><div class="thumb"><div style="left:6.8px;top:28.8px;width:16.3px;height:9.9px;background:#1a1a1a;border:0.6px solid #262626;"></div><div style="left:8.1px;top:31.0px;width:13.7px;height:6.5px;background:repeating-linear-gradient(#ccc 0 0.8px,transparent 0.8px 2.0px);opacity:.45"></div><div style="left:6.8px;top:39.6px;width:16.3px;height:7.7px;background:#1a1a1a;border:0.6px solid #262626;"></div><div style="left:8.1px;top:41.3px;width:13.7px;height:5.1px;background:repeating-linear-gradient(#ccc 0 0.8px,transparent 0.8px 2.0px);opacity:.45"></div><div style="left:6.8px;top:49.5px;width:16.3px;height:9.9px;background:#1a1a1a;border:0.6px solid #262626;"></div><div style="left:8.1px;top:51.7px;width:13.7px;height:6.5px;background:repeating-linear-gradient(#ccc 0 0.8px,transparent 0.8px 2.0px);opacity:.45"></div><div style="left:6.8px;top:61.0px;width:16.3px;height:14.4px;background:#1a1a1a;border:0.6px solid #262626;"></div><div style="left:8.1px;top:64.2px;width:13.7px;height:9.5px;background:repeating-linear-gradient(#ccc 0 0.8px,transparent 0.8px 2.0px);opacity:.45"></div><div style="left:33.2px;top:41.0px;width:16.5px;height:16.2px;background:#1a1a1a;border:0.6px solid #262626;"></div><div style="left:34.5px;top:44.6px;width:13.9px;height:10.7px;background:repeating-linear-gradient(#aaa 0 0.8px,transparent 0.8px 2.0px);opacity:.45"></div><div style="left:55.7px;top:40.5px;width:16.6px;height:15.0px;background:#1a1a1a;border:0.6px solid #262626;"></div><div style="left:56.0px;top:43.1px;width:16.0px;height:8.9px;background:radial-gradient(ellipse 40% 30% at 50% 50%,#e0b070,transparent),linear-gradient(#a07a4a,#d0a060 50%,#a07040)"></div><div style="left:81.4px;top:20.9px;width:16.3px;height:17.1px;background:#1a1a1a;border:0.6px solid #262626;"></div><div style="left:82.7px;top:24.7px;width:13.7px;height:11.3px;background:repeating-linear-gradient(#ccc 0 0.8px,transparent 0.8px 2.0px);opacity:.45"></div><div style="left:82.5px;top:30.0px;width:14.0px;height:1.5px;background:#1d5a8a"></div><div style="left:81.4px;top:39.8px;width:16.3px;height:16.3px;background:#1a1a1a;border:0.6px solid #262626;"></div><div style="left:82.7px;top:43.4px;width:13.7px;height:10.8px;background:repeating-linear-gradient(#ccc 0 0.8px,transparent 0.8px 2.0px);opacity:.45"></div><div style="left:82.5px;top:48.1px;width:14.0px;height:1.5px;background:#1d5a8a"></div><div style="left:81.4px;top:58.3px;width:16.3px;height:16.5px;background:#1a1a1a;border:0.6px solid #262626;"></div><div style="left:82.7px;top:61.9px;width:13.7px;height:10.9px;background:repeating-linear-gradient(#ccc 0 0.8px,transparent 0.8px 2.0px);opacity:.45"></div><div style="left:82.5px;top:66.8px;width:14.0px;height:1.5px;background:#1d5a8a"></div><div style="left:113.5px;top:14.2px;width:16.1px;height:15.5px;background:#1a1a1a;border:0.6px solid #262626;"></div><div style="left:113.9px;top:16.7px;width:15.4px;height:9.5px;background:linear-gradient(90deg,#e0d0b0,#b08050 50%,#e8dcc8)"></div><div style="left:113.5px;top:37.3px;width:16.1px;height:14.6px;background:#1a1a1a;border:0.6px solid #262626;"></div><div style="left:113.9px;top:39.8px;width:15.4px;height:8.6px;background:linear-gradient(90deg,#e0d0b0,#b08050 50%,#e8dcc8)"></div><div style="left:113.5px;top:60.2px;width:16.1px;height:14.6px;background:#1a1a1a;border:0.6px solid #262626;"></div><div style="left:113.9px;top:62.7px;width:15.4px;height:8.6px;background:linear-gradient(90deg,#e0d0b0,#b08050 50%,#e8dcc8)"></div></div><div class="ttl" style="letter-spacing:0.476px">Brand Identity Wo<span class="el">...</span></div></div><div class="card" style="left:47px;top:614px"><div class="thumb"><div style="left:6.8px;top:25.3px;width:9.7px;height:13.2px;background:#1a1a1a;border:0.6px solid #262626;"></div><div style="left:7.8px;top:28.2px;width:7.7px;height:8.7px;background:repeating-linear-gradient(#aaa 0 0.8px,transparent 0.8px 2.0px);opacity:.45"></div><div style="left:6.8px;top:44.9px;width:9.5px;height:12.9px;background:radial-gradient(ellipse 30% 42% at 50% 55%,#151515 0,#151515 55%,transparent 100%),#d8d8d8"></div><div style="left:6.6px;top:59.2px;width:9.7px;height:5.5px;background:#e8e4d0"></div><div style="left:19.8px;top:31.5px;width:9.9px;height:6.0px;background:#1a1a1a;border:0.6px solid #262626;"></div><div style="left:20.8px;top:32.8px;width:7.9px;height:4.0px;background:repeating-linear-gradient(#777 0 0.8px,transparent 0.8px 2.0px);opacity:.45"></div><div style="left:33.0px;top:32.8px;width:9.4px;height:5.5px;background:radial-gradient(ellipse 10% 40% at 50% 55%,#151515 0,#151515 55%,transparent 100%),#c8c8c8"></div><div style="left:44.9px;top:31.5px;width:9.6px;height:6.0px;background:#1a1a1a;border:0.6px solid #262626;"></div><div style="left:45.9px;top:32.8px;width:7.6px;height:4.0px;background:repeating-linear-gradient(#777 0 0.8px,transparent 0.8px 2.0px);opacity:.45"></div><div style="left:58.9px;top:32.8px;width:9.1px;height:5.5px;background:radial-gradient(ellipse 10% 40% at 50% 55%,#2a4aa0 0,#2a4aa0 55%,transparent 100%),#c8c8c8"></div><div style="left:58.9px;top:46.8px;width:9.1px;height:5.5px;background:radial-gradient(ellipse 10% 40% at 50% 55%,#1a8a5a 0,#1a8a5a 55%,transparent 100%),#c8c8c8"></div><div style="left:70.4px;top:31.5px;width:9.1px;height:5.5px;background:#1a1a1a;border:0.6px solid #262626;"></div><div style="left:71.4px;top:32.7px;width:7.1px;height:3.6px;background:repeating-linear-gradient(#777 0 0.8px,transparent 0.8px 2.0px);opacity:.45"></div><div style="left:70.4px;top:39.6px;width:9.4px;height:7.7px;background:#1a1a1a;border:0.6px solid #262626;"></div><div style="left:71.4px;top:41.3px;width:7.4px;height:5.1px;background:repeating-linear-gradient(#aaa 0 0.8px,transparent 0.8px 2.0px);opacity:.45"></div><div style="left:70.4px;top:48.5px;width:9.1px;height:3.5px;background:#1a1a1a;border:0.6px solid #262626;"></div><div style="left:71.4px;top:49.3px;width:7.1px;height:2.3px;background:repeating-linear-gradient(#777 0 0.8px,transparent 0.8px 2.0px);opacity:.45"></div><div style="left:82.0px;top:31.5px;width:9.3px;height:5.5px;background:#1a1a1a;border:0.6px solid #262626;"></div><div style="left:83.0px;top:32.7px;width:7.3px;height:3.6px;background:repeating-linear-gradient(#777 0 0.8px,transparent 0.8px 2.0px);opacity:.45"></div><div style="left:82.0px;top:47.5px;width:9.3px;height:5.5px;background:#1a1a1a;border:0.6px solid #262626;"></div><div style="left:83.0px;top:48.7px;width:7.3px;height:3.6px;background:repeating-linear-gradient(#777 0 0.8px,transparent 0.8px 2.0px);opacity:.45"></div><div style="left:94.4px;top:32.8px;width:9.6px;height:5.5px;background:radial-gradient(ellipse 10% 40% at 50% 55%,#3a5ab0 0,#3a5ab0 55%,transparent 100%),#e8e8e8"></div><div style="left:94.4px;top:47.9px;width:9.6px;height:5.5px;background:radial-gradient(ellipse 10% 40% at 50% 55%,#1a8a5a 0,#1a8a5a 55%,transparent 100%),#b0a888"></div><div style="left:107.3px;top:32.8px;width:9.1px;height:7.9px;background:repeating-linear-gradient(#888 0 0.9px,#444 0.9px 2px)"></div><div style="left:120.0px;top:32.8px;width:9.6px;height:5.5px;background:radial-gradient(ellipse 10% 40% at 50% 55%,#3a5ab0 0,#3a5ab0 55%,transparent 100%),#e8e8e8"></div><div style="left:120.0px;top:47.9px;width:9.3px;height:5.5px;background:radial-gradient(ellipse 10% 40% at 50% 55%,#1a8a5a 0,#1a8a5a 55%,transparent 100%),#b0a888"></div></div><div class="ttl" style="letter-spacing:0.372px">Clothing Ad Work<span class="el">...</span></div></div><div class="card" style="left:223px;top:614px"><div class="thumb"><div style="left:6.8px;top:24.2px;width:16.3px;height:16.0px;background:#1a1a1a;border:0.6px solid #262626;"></div><div style="left:8.1px;top:27.7px;width:13.7px;height:10.6px;background:repeating-linear-gradient(#ccc 0 0.8px,transparent 0.8px 2.0px);opacity:.45"></div><div style="left:6.8px;top:52.3px;width:15.8px;height:23.6px;background:radial-gradient(ellipse 25% 40% at 50% 60%,#2a3ab0 0,#2a3ab0 60%,transparent 100%),radial-gradient(ellipse 10% 15% at 50% 20%,#a02a6a,transparent),#fafafa"></div><div style="left:34.1px;top:23.1px;width:16.5px;height:9.4px;background:#1a1a1a;border:0.6px solid #262626;border-top:0.8px solid #1d6fa5;"></div><div style="left:35.4px;top:25.2px;width:13.9px;height:6.2px;background:repeating-linear-gradient(#ccc 0 0.8px,transparent 0.8px 2.0px);opacity:.45"></div><div style="left:32.0px;top:36.9px;width:15.9px;height:23.6px;background:radial-gradient(ellipse 22% 40% at 50% 55%,#3a40c0 0,#3a40c0 60%,transparent 100%),radial-gradient(ellipse 60% 60% at 50% 45%,#8a5ad0,#2a2a9a)"></div><div style="left:52.8px;top:36.9px;width:15.6px;height:23.4px;background:linear-gradient(transparent 75%,#7a5ad0 80%,#4a3ab0),radial-gradient(ellipse 60% 50% at 50% 40%,#9a6ad8,#2a2a9a)"></div><div style="left:72.0px;top:13.2px;width:16.0px;height:16.5px;background:#1a1a1a;border:0.6px solid #262626;border-top:0.8px solid #1d6fa5;"></div><div style="left:73.3px;top:16.8px;width:13.4px;height:10.9px;background:repeating-linear-gradient(#ddd 0 0.8px,transparent 0.8px 2.0px);opacity:.45"></div><div style="left:72.0px;top:32.5px;width:16.0px;height:15.4px;background:#1a1a1a;border:0.6px solid #262626;border-top:0.8px solid #1d6fa5;"></div><div style="left:73.3px;top:35.9px;width:13.4px;height:10.2px;background:repeating-linear-gradient(#ddd 0 0.8px,transparent 0.8px 2.0px);opacity:.45"></div><div style="left:93.3px;top:28.0px;width:16.5px;height:12.2px;background:#1a1a1a;border:0.6px solid #262626;"></div><div style="left:94.6px;top:30.7px;width:13.9px;height:8.1px;background:repeating-linear-gradient(#999 0 0.8px,transparent 0.8px 2.0px);opacity:.45"></div><div style="left:113.2px;top:30.0px;width:16.4px;height:29.0px;background:#1a1a1a;border:0.6px solid #262626;border-top:0.8px solid #e0a800;"></div><div style="left:113.5px;top:33.0px;width:15.8px;height:24.0px;background:linear-gradient(transparent 72%,#7a5ad0 80%,#4a3ab0),radial-gradient(ellipse 60% 50% at 50% 40%,#9a6ad8,#2a2a9a)"></div></div><div class="ttl" style="letter-spacing:0.506px">Product Animatio<span class="el">...</span></div></div><div class="card" style="left:399px;top:614px"><div class="thumb"><div style="left:6.6px;top:13.8px;width:35.0px;height:34.6px;background:#1a1a1a;border:0.6px solid #262626;border-top:0.8px solid #1d5a8a;"></div><div style="left:8.8px;top:20.4px;width:28.2px;height:26.4px;background:repeating-linear-gradient(#cfcfcf 0 0.8px,transparent 0.8px 2.0px);opacity:.45"></div><div style="left:38.3px;top:19.8px;width:1.9px;height:27.0px;background:#888"></div><div style="left:6.8px;top:55.0px;width:35.0px;height:20.9px;background:#1a1a1a;border:0.6px solid #262626;border-top:0.8px solid #1d5a8a;"></div><div style="left:9.0px;top:62.0px;width:19.0px;height:1.5px;background:repeating-linear-gradient(#aaa 0 0.8px,transparent 0.8px 2.0px);opacity:.45"></div><div style="left:8.5px;top:61.6px;width:31.5px;height:12.1px;background:#151515"></div><div style="left:51.7px;top:44.6px;width:35.2px;height:25.8px;background:#1a1a1a;border:0.6px solid #262626;"></div><div style="left:53.5px;top:51.0px;width:25.1px;height:2.5px;background:#333"></div><div style="left:53.5px;top:55.0px;width:18.9px;height:2.3px;background:#333"></div><div style="left:53.8px;top:59.0px;width:9.2px;height:1.5px;background:#1d6fa5"></div><div style="left:53.5px;top:59.5px;width:31.5px;height:9.5px;background:#161616"></div><div style="left:94.4px;top:33.0px;width:35.2px;height:33.6px;background:#1a1a1a;border:0.6px solid #262626;border-top:0.8px solid #1f6a3a;"></div><div style="left:96.0px;top:39.4px;width:31.8px;height:18.4px;background:radial-gradient(ellipse 35% 35% at 50% 55%,#4a7ab8 0,#3a5a8a 50%,transparent 100%),radial-gradient(circle at 48% 55%,#c06a3a 0,transparent 18%),#0a1a2a"></div><div style="left:97.0px;top:60.0px;width:3.0px;height:3.0px;background:#aaa"></div><div style="left:101.0px;top:61.0px;width:9.0px;height:1.3px;background:#555"></div></div><div class="ttl" style="letter-spacing:0.510px">X-Ray Workflow</div></div><div class="card" style="left:575px;top:614px"><div class="thumb"><div style="left:6.8px;top:22.6px;width:12.8px;height:12.6px;background:#1a1a1a;border:0.6px solid #262626;"></div><div style="left:7.8px;top:25.4px;width:10.8px;height:8.3px;background:repeating-linear-gradient(#bbb 0 0.8px,transparent 0.8px 2.0px);opacity:.45"></div><div style="left:6.8px;top:39.0px;width:12.8px;height:7.2px;background:#1a1a1a;border:0.6px solid #262626;"></div><div style="left:7.8px;top:40.6px;width:10.8px;height:4.8px;background:repeating-linear-gradient(#777 0 0.8px,transparent 0.8px 2.0px);opacity:.45"></div><div style="left:7.9px;top:54.5px;width:12.5px;height:12.4px;background:radial-gradient(ellipse 28% 36% at 50% 50%,#e8c020 0,#d03a20 60%,transparent 100%),#f4f4f4"></div><div style="left:24.4px;top:28.4px;width:13.2px;height:9.0px;background:#1a1a1a;border:0.6px solid #262626;"></div><div style="left:25.5px;top:30.4px;width:11.1px;height:5.9px;background:repeating-linear-gradient(#999 0 0.8px,transparent 0.8px 2.0px);opacity:.45"></div><div style="left:43.0px;top:34.2px;width:12.8px;height:22.8px;background:#1a1a1a;border:0.6px solid #262626;"></div><div style="left:43.1px;top:35.8px;width:12.5px;height:19.2px;background:radial-gradient(ellipse 28% 36% at 50% 50%,#e8c020 0,#d03a20 60%,transparent 100%),#0a0a0a"></div><div style="left:58.5px;top:29.2px;width:12.8px;height:12.6px;background:#1a1a1a;border:0.6px solid #262626;"></div><div style="left:59.5px;top:32.0px;width:10.8px;height:8.3px;background:repeating-linear-gradient(#ccc 0 0.8px,transparent 0.8px 2.0px);opacity:.45"></div><div style="left:77.0px;top:33.0px;width:12.3px;height:23.0px;background:#1a1a1a;border:0.6px solid #262626;"></div><div style="left:77.0px;top:34.7px;width:12.3px;height:19.3px;background:radial-gradient(ellipse 28% 36% at 50% 50%,#e8c020 0,#d03a20 60%,transparent 100%),#0a0a0a"></div><div style="left:97.4px;top:28.6px;width:12.6px;height:12.3px;background:#1a1a1a;border:0.6px solid #262626;"></div><div style="left:98.4px;top:31.3px;width:10.6px;height:8.1px;background:repeating-linear-gradient(#ccc 0 0.8px,transparent 0.8px 2.0px);opacity:.45"></div><div style="left:116.8px;top:36.5px;width:12.5px;height:22.5px;background:#1a1a1a;border:0.6px solid #262626;"></div><div style="left:116.8px;top:38.0px;width:12.5px;height:19.0px;background:radial-gradient(ellipse 28% 36% at 50% 50%,#e8c020 0,#d03a20 60%,transparent 100%),#0a0a0a"></div></div><div class="ttl" style="letter-spacing:0.017px">Food Explosion W<span class="el">...</span></div></div><div class="card" style="left:751px;top:614px"><div class="thumb"><div style="left:0.0px;top:12.1px;width:19.8px;height:13.2px;background:#1a1a1a;border:0.6px solid #262626;border-top:0.8px solid #1d5a8a;"></div><div style="left:1.6px;top:15.0px;width:16.6px;height:8.7px;background:repeating-linear-gradient(#999 0 0.8px,transparent 0.8px 2.0px);opacity:.45"></div><div style="left:0.0px;top:38.0px;width:19.8px;height:13.2px;background:#1a1a1a;border:0.6px solid #262626;border-top:0.8px solid #1d5a8a;"></div><div style="left:1.6px;top:40.9px;width:16.6px;height:8.7px;background:repeating-linear-gradient(#999 0 0.8px,transparent 0.8px 2.0px);opacity:.45"></div><div style="left:0.0px;top:61.8px;width:17.8px;height:21.2px;background:radial-gradient(ellipse 40% 28% at 50% 55%,#2a7ae0 0,#3a8af0 60%,transparent 100%),linear-gradient(#c8d0f0,#b8c8f0)"></div><div style="left:27.0px;top:11.6px;width:22.3px;height:15.4px;background:#1a1a1a;border:0.6px solid #262626;"></div><div style="left:28.8px;top:15.0px;width:18.7px;height:10.2px;background:repeating-linear-gradient(#bbb 0 0.8px,transparent 0.8px 2.0px);opacity:.45"></div><div style="left:25.9px;top:41.3px;width:22.5px;height:16.5px;background:#1a1a1a;border:0.6px solid #262626;"></div><div style="left:27.7px;top:44.9px;width:18.9px;height:10.9px;background:repeating-linear-gradient(#bbb 0 0.8px,transparent 0.8px 2.0px);opacity:.45"></div><div style="left:55.5px;top:6.5px;width:22.5px;height:29.5px;background:#1a1a1a;border:0.6px solid #262626;"></div><div style="left:55.9px;top:9.7px;width:21.7px;height:21.3px;background:radial-gradient(circle at 20% 20%,#8a6a4a 0,transparent 14%),radial-gradient(circle at 50% 20%,#3a3a5a 0,transparent 14%),radial-gradient(circle at 80% 20%,#c04a3a 0,transparent 14%),radial-gradient(circle at 20% 50%,#3a4a7a 0,transparent 14%),radial-gradient(circle at 50% 50%,#f09a20 0,transparent 16%),radial-gradient(circle at 80% 50%,#4a7ad0 0,transparent 14%),radial-gradient(circle at 20% 80%,#7a5a9a 0,transparent 14%),radial-gradient(circle at 50% 80%,#5a5ab0 0,transparent 14%),radial-gradient(circle at 80% 80%,#8a4a2a 0,transparent 14%),#f8f8f8"></div><div style="left:85.5px;top:6.5px;width:23.0px;height:29.5px;background:#1a1a1a;border:0.6px solid #262626;"></div><div style="left:86.0px;top:9.7px;width:22.0px;height:21.3px;background:radial-gradient(circle at 62% 30%,#9a4ad0 0,#b070e0 20%,transparent 34%),linear-gradient(-45deg,transparent 44%,#8a4a2a 46%,#8a4a2a 52%,transparent 54%),#fafafa"></div><div style="left:117.5px;top:6.6px;width:18.5px;height:31.4px;background:#1a1a1a;border:0.6px solid #262626;border-top:0.8px solid #d04a6a;"></div><div style="left:118.0px;top:11.5px;width:18.0px;height:21.5px;background:#2a2a2a"></div><div style="left:56.5px;top:47.0px;width:23.0px;height:29.0px;background:#1a1a1a;border:0.6px solid #262626;"></div><div style="left:57.0px;top:50.0px;width:22.0px;height:22.0px;background:radial-gradient(circle at 20% 20%,#2a5ab0 0,transparent 12%),radial-gradient(circle at 50% 20%,#1a4a6a 0,transparent 14%),radial-gradient(circle at 80% 20%,#2a3a6a 0,transparent 12%),radial-gradient(circle at 20% 50%,#d04a5a 0,transparent 12%),radial-gradient(circle at 50% 50%,#4a6ab0 0,transparent 12%),radial-gradient(circle at 80% 50%,#3a7ad0 0,transparent 12%),radial-gradient(circle at 20% 80%,#4a6ab0 0,transparent 12%),radial-gradient(circle at 50% 80%,#2a4a9a 0,transparent 12%),radial-gradient(circle at 80% 80%,#3a5a9a 0,transparent 12%),#fafafa"></div></div><div class="ttl" style="letter-spacing:0.350px"><svg class="gear" width="13" height="13" viewBox="0 0 24 24"><g fill="#d8d8d8"><rect x="9.6" y="0.6" width="4.8" height="6" rx="1" transform="rotate(0 12 12)"/><rect x="9.6" y="0.6" width="4.8" height="6" rx="1" transform="rotate(45 12 12)"/><rect x="9.6" y="0.6" width="4.8" height="6" rx="1" transform="rotate(90 12 12)"/><rect x="9.6" y="0.6" width="4.8" height="6" rx="1" transform="rotate(135 12 12)"/><rect x="9.6" y="0.6" width="4.8" height="6" rx="1" transform="rotate(180 12 12)"/><rect x="9.6" y="0.6" width="4.8" height="6" rx="1" transform="rotate(225 12 12)"/><rect x="9.6" y="0.6" width="4.8" height="6" rx="1" transform="rotate(270 12 12)"/><rect x="9.6" y="0.6" width="4.8" height="6" rx="1" transform="rotate(315 12 12)"/><circle cx="12" cy="12" r="8.4"/></g><circle cx="12" cy="12" r="4.6" fill="#3a3a3a"/><circle cx="12" cy="12" r="2.6" fill="#9a9a9a"/></svg>Collection of 3<span class="el">...</span></div></div><div class="card" style="left:927px;top:614px"><div class="thumb"><svg style="position:absolute;left:0;top:0" width="136" height="90" viewBox="0 0 136 90"><g fill="none" stroke="#333" stroke-width="0.5"><path d="M24 38C30 38 30 62 35 62"/><path d="M24.8 63C30 63 30 64 35 64"/><path d="M51.7 14C62 14 70 32 72 33"/><path d="M51.7 38C56 38 56 63 61 63"/><path d="M78.7 38C84 38 84 38 88 38"/><path d="M78.3 62C84 62 84 60 88 60"/><path d="M105 38C110 38 108 60 112.4 60"/></g></svg><div style="left:6.8px;top:33.0px;width:17.2px;height:10.5px;background:#1a1a1a;border:0.6px solid #262626;"></div><div style="left:8.2px;top:35.3px;width:14.4px;height:6.9px;background:repeating-linear-gradient(#ccc 0 0.8px,transparent 0.8px 2.0px);opacity:.45"></div><div style="left:6.8px;top:50.8px;width:18.0px;height:27.1px;background:radial-gradient(ellipse 30% 45% at 50% 55%,#dcdcdc 0,#dcdcdc 55%,transparent 100%),#f6f6f6"></div><div style="left:34.7px;top:9.4px;width:17.0px;height:10.4px;background:#1a1a1a;border:0.6px solid #262626;"></div><div style="left:36.1px;top:11.7px;width:14.3px;height:6.9px;background:repeating-linear-gradient(#ddd 0 0.8px,transparent 0.8px 2.0px);opacity:.45"></div><div style="left:34.7px;top:20.9px;width:17.0px;height:8.8px;background:#1a1a1a;border:0.6px solid #262626;"></div><div style="left:36.1px;top:22.8px;width:14.3px;height:5.8px;background:repeating-linear-gradient(#ddd 0 0.8px,transparent 0.8px 2.0px);opacity:.45"></div><div style="left:34.7px;top:32.5px;width:17.0px;height:12.6px;background:#1a1a1a;border:0.6px solid #262626;"></div><div style="left:36.0px;top:35.0px;width:14.0px;height:3.0px;background:repeating-linear-gradient(#aaa 0 0.8px,transparent 0.8px 2.0px);opacity:.45"></div><div style="left:35.5px;top:41.0px;width:15.5px;height:3.8px;background:linear-gradient(90deg,#aaa,#eee)"></div><div style="left:34.7px;top:48.5px;width:17.0px;height:31.8px;background:#1a1a1a;border:0.6px solid #262626;border-top:0.8px solid #1f3a2a;"></div><div style="left:35.0px;top:51.5px;width:16.5px;height:24.4px;background:radial-gradient(ellipse 34% 48% at 50% 55%,#5a5a5a 0,#5a5a5a 55%,transparent 100%),#f8f8f8"></div><div style="left:61.6px;top:32.5px;width:17.1px;height:11.5px;background:#1a1a1a;border:0.6px solid #262626;"></div><div style="left:63.0px;top:35.0px;width:14.4px;height:7.6px;background:repeating-linear-gradient(#ccc 0 0.8px,transparent 0.8px 2.0px);opacity:.45"></div><div style="left:61.0px;top:48.0px;width:17.6px;height:29.0px;background:#1a1a1a;border:0.6px solid #262626;border-top:0.8px solid #1f3a2a;"></div><div style="left:61.0px;top:50.8px;width:17.3px;height:23.2px;background:radial-gradient(ellipse 34% 48% at 50% 55%,#4a5a6a 0,#4a5a6a 55%,transparent 100%),#f8f8f8"></div><div style="left:88.0px;top:15.4px;width:17.0px;height:14.3px;background:#1a1a1a;border:0.6px solid #262626;"></div><div style="left:89.4px;top:18.5px;width:14.3px;height:9.4px;background:repeating-linear-gradient(#ddd 0 0.8px,transparent 0.8px 2.0px);opacity:.45"></div><div style="left:88.0px;top:32.5px;width:17.0px;height:12.6px;background:#1a1a1a;border:0.6px solid #262626;"></div><div style="left:89.0px;top:35.0px;width:15.0px;height:3.0px;background:repeating-linear-gradient(#aaa 0 0.8px,transparent 0.8px 2.0px);opacity:.45"></div><div style="left:88.8px;top:41.0px;width:15.7px;height:3.8px;background:linear-gradient(90deg,#aaa,#eee)"></div><div style="left:88.0px;top:48.4px;width:17.0px;height:23.1px;background:#1a1a1a;border:0.6px solid #262626;border-top:0.8px solid #1f3a2a;"></div><div style="left:89.0px;top:51.0px;width:15.0px;height:17.0px;background:#282828"></div><div style="left:112.4px;top:49.0px;width:17.2px;height:23.0px;background:#1a1a1a;border:0.6px solid #262626;border-top:0.8px solid #1f3a2a;"></div><div style="left:113.4px;top:51.5px;width:15.2px;height:16.5px;background:#282828"></div></div><div class="ttl" style="letter-spacing:0.170px">Sketch to Final Re<span class="el">...</span></div></div><div class="card" style="left:1103px;top:614px"><div class="thumb"><div style="left:2.8px;top:19.3px;width:12.8px;height:9.9px;background:radial-gradient(circle,rgba(190,150,120,.6) 0 0.8px,transparent 1.1px) 0 0/3.2px 3px,#3a3836"></div><div style="left:17.0px;top:29.2px;width:12.7px;height:9.8px;background:radial-gradient(circle,rgba(190,150,120,.6) 0 0.8px,transparent 1.1px) 0 0/3.2px 3px,#3a3836"></div><div style="left:31.4px;top:39.6px;width:12.6px;height:9.9px;background:radial-gradient(circle,rgba(190,150,120,.6) 0 0.8px,transparent 1.1px) 0 0/3.2px 3px,#3a3836"></div><div style="left:17.0px;top:49.5px;width:12.7px;height:9.9px;background:radial-gradient(circle,rgba(190,150,120,.6) 0 0.8px,transparent 1.1px) 0 0/3.2px 3px,#3a3836"></div><div style="left:2.2px;top:59.4px;width:13.0px;height:9.9px;background:radial-gradient(circle,rgba(190,150,120,.6) 0 0.8px,transparent 1.1px) 0 0/3.2px 3px,#3a3836"></div><div style="left:0.0px;top:29.2px;width:1.2px;height:9.8px;background:radial-gradient(circle,rgba(190,150,120,.6) 0 0.8px,transparent 1.1px) 0 0/3.2px 3px,#3a3836"></div><div style="left:0.0px;top:49.5px;width:1.2px;height:9.9px;background:radial-gradient(circle,rgba(190,150,120,.6) 0 0.8px,transparent 1.1px) 0 0/3.2px 3px,#3a3836"></div><div style="left:80.9px;top:12.3px;width:13.4px;height:14.2px;background:#1a1a1a;border:0.6px solid #262626;"></div><div style="left:81.2px;top:13.8px;width:12.8px;height:10.2px;background:radial-gradient(circle,rgba(120,80,60,.9) 0 0.8px,transparent 1.1px) 0 0/3.2px 3px,#f4f0ee"></div><div style="left:66.7px;top:25.2px;width:13.6px;height:13.6px;background:#1a1a1a;border:0.6px solid #262626;"></div><div style="left:67.0px;top:26.7px;width:13.0px;height:9.6px;background:radial-gradient(circle,rgba(120,80,60,.9) 0 0.8px,transparent 1.1px) 0 0/3.2px 3px,#f4f0ee"></div><div style="left:96.0px;top:25.2px;width:13.3px;height:13.6px;background:#1a1a1a;border:0.6px solid #262626;"></div><div style="left:96.3px;top:26.7px;width:12.7px;height:9.6px;background:radial-gradient(circle,rgba(120,80,60,.9) 0 0.8px,transparent 1.1px) 0 0/3.2px 3px,#f4f0ee"></div><div style="left:52.0px;top:38.1px;width:13.8px;height:13.7px;background:#1a1a1a;border:0.6px solid #262626;"></div><div style="left:52.3px;top:39.6px;width:13.2px;height:9.7px;background:radial-gradient(circle,rgba(120,80,60,.9) 0 0.8px,transparent 1.1px) 0 0/3.2px 3px,#f4f0ee"></div><div style="left:111.7px;top:37.5px;width:13.5px;height:14.0px;background:#1a1a1a;border:0.6px solid #262626;"></div><div style="left:112.0px;top:39.0px;width:12.9px;height:10.0px;background:radial-gradient(circle,rgba(120,80,60,.9) 0 0.8px,transparent 1.1px) 0 0/3.2px 3px,#f4f0ee"></div><div style="left:66.7px;top:50.5px;width:13.6px;height:13.8px;background:#1a1a1a;border:0.6px solid #262626;"></div><div style="left:67.0px;top:52.0px;width:13.0px;height:9.8px;background:radial-gradient(circle,rgba(120,80,60,.9) 0 0.8px,transparent 1.1px) 0 0/3.2px 3px,#f4f0ee"></div><div style="left:96.5px;top:50.2px;width:13.6px;height:13.7px;background:#1a1a1a;border:0.6px solid #262626;"></div><div style="left:96.8px;top:51.7px;width:13.0px;height:9.7px;background:radial-gradient(circle,rgba(120,80,60,.9) 0 0.8px,transparent 1.1px) 0 0/3.2px 3px,#f4f0ee"></div><div style="left:81.7px;top:63.2px;width:13.4px;height:13.6px;background:#1a1a1a;border:0.6px solid #262626;"></div><div style="left:82.0px;top:64.7px;width:12.8px;height:9.6px;background:radial-gradient(circle,rgba(120,80,60,.9) 0 0.8px,transparent 1.1px) 0 0/3.2px 3px,#f4f0ee"></div><div style="left:132.0px;top:37.4px;width:4.0px;height:16.6px;background:#1a1a1a;border:0.6px solid #262626;"></div></div><div class="ttl" style="letter-spacing:0.537px"><svg class="gear" width="13" height="13" viewBox="0 0 24 24"><g fill="#d8d8d8"><rect x="9.6" y="0.6" width="4.8" height="6" rx="1" transform="rotate(0 12 12)"/><rect x="9.6" y="0.6" width="4.8" height="6" rx="1" transform="rotate(45 12 12)"/><rect x="9.6" y="0.6" width="4.8" height="6" rx="1" transform="rotate(90 12 12)"/><rect x="9.6" y="0.6" width="4.8" height="6" rx="1" transform="rotate(135 12 12)"/><rect x="9.6" y="0.6" width="4.8" height="6" rx="1" transform="rotate(180 12 12)"/><rect x="9.6" y="0.6" width="4.8" height="6" rx="1" transform="rotate(225 12 12)"/><rect x="9.6" y="0.6" width="4.8" height="6" rx="1" transform="rotate(270 12 12)"/><rect x="9.6" y="0.6" width="4.8" height="6" rx="1" transform="rotate(315 12 12)"/><circle cx="12" cy="12" r="8.4"/></g><circle cx="12" cy="12" r="4.6" fill="#3a3a3a"/><circle cx="12" cy="12" r="2.6" fill="#9a9a9a"/></svg>8 Views Isome<span class="el">...</span></div></div><div class="card" style="left:1279px;top:614px"><div class="thumb"><svg style="position:absolute;left:0;top:0" width="136" height="90" viewBox="0 0 136 90"><g fill="none" stroke="#333" stroke-width="0.5"><path d="M17.4 47C22 47 22 47 27.5 47"/><path d="M37.4 15C40 15 40 15 43.5 15"/><path d="M37.4 50C40 50 40 43 43.5 43"/><path d="M54.5 15C56 15 56 15 58.9 15"/><path d="M54.5 43C56 43 56 44 58.9 44"/><path d="M70.4 14C72 14 72 14 74.5 14"/><path d="M86 15C100 15 104 36 118.3 36"/><path d="M86 44C92 44 90 44 93.5 44"/><path d="M103.2 44C110 44 110 38 118.3 38"/><path d="M86 67C100 67 104 57 118.3 57"/></g></svg><div style="left:6.8px;top:41.6px;width:10.6px;height:12.4px;background:radial-gradient(ellipse 25% 40% at 50% 60%,#3a4a6a,transparent),linear-gradient(90deg,#b08a50,#e0c080 50%,#a07a40)"></div><div style="left:27.5px;top:9.4px;width:9.9px;height:9.6px;background:#1a1a1a;border:0.6px solid #262626;"></div><div style="left:28.5px;top:11.5px;width:7.9px;height:6.3px;background:repeating-linear-gradient(#bbb 0 0.8px,transparent 0.8px 2.0px);opacity:.45"></div><div style="left:27.5px;top:20.0px;width:9.9px;height:6.0px;background:#1a1a1a;border:0.6px solid #262626;"></div><div style="left:28.5px;top:21.3px;width:7.9px;height:4.0px;background:repeating-linear-gradient(#bbb 0 0.8px,transparent 0.8px 2.0px);opacity:.45"></div><div style="left:27.5px;top:28.0px;width:9.9px;height:7.2px;background:#1a1a1a;border:0.6px solid #262626;"></div><div style="left:28.5px;top:29.6px;width:7.9px;height:4.8px;background:repeating-linear-gradient(#bbb 0 0.8px,transparent 0.8px 2.0px);opacity:.45"></div><div style="left:27.5px;top:39.6px;width:9.9px;height:5.4px;background:#1a1a1a;border:0.6px solid #262626;"></div><div style="left:28.5px;top:40.8px;width:7.9px;height:3.6px;background:repeating-linear-gradient(#bbb 0 0.8px,transparent 0.8px 2.0px);opacity:.45"></div><div style="left:27.5px;top:47.0px;width:9.9px;height:10.8px;background:#1a1a1a;border:0.6px solid #262626;"></div><div style="left:28.5px;top:49.4px;width:7.9px;height:7.1px;background:repeating-linear-gradient(#bbb 0 0.8px,transparent 0.8px 2.0px);opacity:.45"></div><div style="left:27.5px;top:61.6px;width:9.9px;height:6.4px;background:#1a1a1a;border:0.6px solid #262626;"></div><div style="left:28.5px;top:63.0px;width:7.9px;height:4.2px;background:repeating-linear-gradient(#bbb 0 0.8px,transparent 0.8px 2.0px);opacity:.45"></div><div style="left:27.5px;top:69.5px;width:9.9px;height:9.7px;background:#1a1a1a;border:0.6px solid #262626;"></div><div style="left:28.5px;top:71.6px;width:7.9px;height:6.4px;background:repeating-linear-gradient(#bbb 0 0.8px,transparent 0.8px 2.0px);opacity:.45"></div><div style="left:43.5px;top:9.4px;width:11.0px;height:11.6px;background:#1a1a1a;border:0.6px solid #262626;"></div><div style="left:44.5px;top:12.0px;width:9.0px;height:7.7px;background:repeating-linear-gradient(#bbb 0 0.8px,transparent 0.8px 2.0px);opacity:.45"></div><div style="left:44.0px;top:18.0px;width:10.0px;height:2.0px;background:#bbb"></div><div style="left:43.5px;top:22.0px;width:11.0px;height:7.7px;background:#1a1a1a;border:0.6px solid #262626;"></div><div style="left:44.5px;top:23.7px;width:9.0px;height:5.1px;background:repeating-linear-gradient(#bbb 0 0.8px,transparent 0.8px 2.0px);opacity:.45"></div><div style="left:44.0px;top:26.7px;width:10.0px;height:2.0px;background:#bbb"></div><div style="left:43.5px;top:39.0px;width:11.0px;height:9.4px;background:#1a1a1a;border:0.6px solid #262626;"></div><div style="left:44.5px;top:41.1px;width:9.0px;height:6.2px;background:repeating-linear-gradient(#bbb 0 0.8px,transparent 0.8px 2.0px);opacity:.45"></div><div style="left:44.0px;top:45.4px;width:10.0px;height:2.0px;background:#bbb"></div><div style="left:43.5px;top:61.6px;width:11.0px;height:8.8px;background:#1a1a1a;border:0.6px solid #262626;"></div><div style="left:44.5px;top:63.5px;width:9.0px;height:5.8px;background:repeating-linear-gradient(#bbb 0 0.8px,transparent 0.8px 2.0px);opacity:.45"></div><div style="left:44.0px;top:67.4px;width:10.0px;height:2.0px;background:#bbb"></div><div style="left:58.9px;top:9.4px;width:11.5px;height:9.8px;background:#1a1a1a;border:0.6px solid #262626;"></div><div style="left:59.9px;top:11.6px;width:9.5px;height:6.5px;background:repeating-linear-gradient(#aaa 0 0.8px,transparent 0.8px 2.0px);opacity:.45"></div><div style="left:59.5px;top:16.2px;width:10.5px;height:2.0px;background:#bbb"></div><div style="left:58.9px;top:39.6px;width:11.5px;height:9.4px;background:#1a1a1a;border:0.6px solid #262626;"></div><div style="left:59.9px;top:41.7px;width:9.5px;height:6.2px;background:repeating-linear-gradient(#aaa 0 0.8px,transparent 0.8px 2.0px);opacity:.45"></div><div style="left:59.5px;top:46.0px;width:10.5px;height:2.0px;background:#bbb"></div><div style="left:58.9px;top:61.6px;width:11.5px;height:11.0px;background:#1a1a1a;border:0.6px solid #262626;"></div><div style="left:59.9px;top:64.0px;width:9.5px;height:7.3px;background:repeating-linear-gradient(#aaa 0 0.8px,transparent 0.8px 2.0px);opacity:.45"></div><div style="left:59.5px;top:69.6px;width:10.5px;height:2.0px;background:#bbb"></div><div style="left:74.5px;top:10.0px;width:11.5px;height:10.0px;background:#1a1a1a;border:0.6px solid #262626;"></div><div style="left:74.8px;top:11.6px;width:10.8px;height:6.6px;background:linear-gradient(90deg,#8a5a3a,#e0c0a0 40%,#6a4a3a 70%,#d0a080)"></div><div style="left:74.5px;top:39.0px;width:11.8px;height:10.0px;background:#1a1a1a;border:0.6px solid #262626;"></div><div style="left:74.8px;top:40.7px;width:11.2px;height:6.1px;background:linear-gradient(90deg,#3a4a5a,#8a9aaa 40%,#3a4a5a 70%,#9aa0aa)"></div><div style="left:74.0px;top:62.0px;width:11.6px;height:10.0px;background:#1a1a1a;border:0.6px solid #262626;"></div><div style="left:74.3px;top:63.8px;width:11.0px;height:6.6px;background:linear-gradient(90deg,#5a7a5a,#aab0a0 40%,#5a6a7a 70%,#9a9a90)"></div><div style="left:93.5px;top:39.0px;width:9.7px;height:11.0px;background:#1a1a1a;border:0.6px solid #262626;"></div><div style="left:94.5px;top:41.4px;width:7.7px;height:7.3px;background:repeating-linear-gradient(#bbb 0 0.8px,transparent 0.8px 2.0px);opacity:.45"></div><div style="left:118.3px;top:29.2px;width:11.3px;height:15.4px;background:#222;border:0.6px solid #262626;"></div><div style="left:118.3px;top:50.0px;width:11.3px;height:15.0px;background:#222;border:0.6px solid #262626;"></div></div><div class="ttl" style="letter-spacing:0.044px"><svg class="gear" width="13" height="13" viewBox="0 0 24 24"><g fill="#d8d8d8"><rect x="9.6" y="0.6" width="4.8" height="6" rx="1" transform="rotate(0 12 12)"/><rect x="9.6" y="0.6" width="4.8" height="6" rx="1" transform="rotate(45 12 12)"/><rect x="9.6" y="0.6" width="4.8" height="6" rx="1" transform="rotate(90 12 12)"/><rect x="9.6" y="0.6" width="4.8" height="6" rx="1" transform="rotate(135 12 12)"/><rect x="9.6" y="0.6" width="4.8" height="6" rx="1" transform="rotate(180 12 12)"/><rect x="9.6" y="0.6" width="4.8" height="6" rx="1" transform="rotate(225 12 12)"/><rect x="9.6" y="0.6" width="4.8" height="6" rx="1" transform="rotate(270 12 12)"/><rect x="9.6" y="0.6" width="4.8" height="6" rx="1" transform="rotate(315 12 12)"/><circle cx="12" cy="12" r="8.4"/></g><circle cx="12" cy="12" r="4.6" fill="#3a3a3a"/><circle cx="12" cy="12" r="2.6" fill="#9a9a9a"/></svg>Live Action Fil<span class="el">...</span></div></div><div class="card" style="left:1455px;top:614px"><div class="thumb"><div style="left:0.0px;top:23.1px;width:22.0px;height:15.4px;background:#1a1a1a;border:0.6px solid #262626;border-top:0.8px solid #1d5a8a;"></div><div style="left:0.0px;top:28.5px;width:20.0px;height:8.0px;background:repeating-linear-gradient(#ccc 0 0.8px,transparent 0.8px 2.0px);opacity:.45"></div><div style="left:0.0px;top:48.2px;width:22.0px;height:15.4px;background:#1a1a1a;border:0.6px solid #262626;border-top:0.8px solid #1d5a8a;"></div><div style="left:0.0px;top:53.5px;width:17.0px;height:2.5px;background:repeating-linear-gradient(#ccc 0 0.8px,transparent 0.8px 2.0px);opacity:.45"></div><div style="left:37.4px;top:26.4px;width:25.9px;height:18.7px;background:#1a1a1a;border:0.6px solid #262626;"></div><div style="left:38.5px;top:31.0px;width:16.5px;height:2.8px;background:#333"></div><div style="left:38.5px;top:34.0px;width:16.5px;height:2.8px;background:#333"></div><div style="left:39.0px;top:38.0px;width:6.0px;height:1.3px;background:#1d6fa5"></div><div style="left:72.8px;top:47.3px;width:26.4px;height:24.7px;background:#1a1a1a;border:0.6px solid #262626;border-top:0.8px solid #1f6a3a;"></div><div style="left:73.5px;top:52.0px;width:25.0px;height:14.0px;background:radial-gradient(ellipse 18% 35% at 45% 55%,#f0e8f0 0,#c890b0 40%,transparent 100%),radial-gradient(circle at 85% 15%,#ddd 0,transparent 20%),linear-gradient(90deg,#1a1a2a,#4a3a5a 40%,#2a2a3a 70%,#5a6a8a)"></div><div style="left:114.4px;top:17.0px;width:22.6px;height:25.4px;background:#1a1a1a;border:0.6px solid #262626;border-top:0.8px solid #c08020;"></div><div style="left:114.9px;top:21.8px;width:22.1px;height:14.0px;background:radial-gradient(ellipse 18% 35% at 45% 55%,#f0e8f0 0,#c890b0 40%,transparent 100%),radial-gradient(circle at 85% 15%,#ddd 0,transparent 20%),linear-gradient(90deg,#1a1a2a,#4a3a5a 40%,#2a2a3a 70%,#5a6a8a)"></div></div><div class="ttl" style="letter-spacing:0.617px"><svg class="gear" width="13" height="13" viewBox="0 0 24 24"><g fill="#d8d8d8"><rect x="9.6" y="0.6" width="4.8" height="6" rx="1" transform="rotate(0 12 12)"/><rect x="9.6" y="0.6" width="4.8" height="6" rx="1" transform="rotate(45 12 12)"/><rect x="9.6" y="0.6" width="4.8" height="6" rx="1" transform="rotate(90 12 12)"/><rect x="9.6" y="0.6" width="4.8" height="6" rx="1" transform="rotate(135 12 12)"/><rect x="9.6" y="0.6" width="4.8" height="6" rx="1" transform="rotate(180 12 12)"/><rect x="9.6" y="0.6" width="4.8" height="6" rx="1" transform="rotate(225 12 12)"/><rect x="9.6" y="0.6" width="4.8" height="6" rx="1" transform="rotate(270 12 12)"/><rect x="9.6" y="0.6" width="4.8" height="6" rx="1" transform="rotate(315 12 12)"/><circle cx="12" cy="12" r="8.4"/></g><circle cx="12" cy="12" r="4.6" fill="#3a3a3a"/><circle cx="12" cy="12" r="2.6" fill="#9a9a9a"/></svg>360° Video Ge<span class="el">...</span></div></div>
</body></html>
